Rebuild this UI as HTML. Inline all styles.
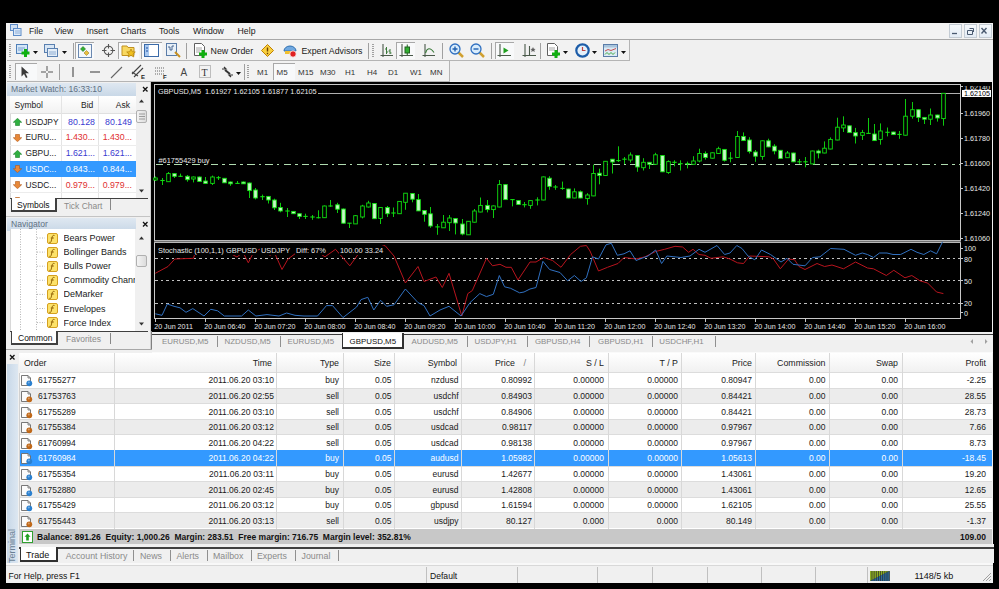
<!DOCTYPE html><html><head><meta charset="utf-8"><style>
*{box-sizing:border-box;margin:0;padding:0}
html,body{width:999px;height:589px;overflow:hidden;background:#000}
body{position:relative;font-family:"Liberation Sans",sans-serif;font-size:8.5px;color:#000}
.a{position:absolute}
.t{position:absolute;white-space:nowrap;line-height:10px}
.r{text-align:right}
</style></head><body>

<div class="a" style="left:6px;top:23px;width:987px;height:560px;background:#f0f0f0"></div>
<div class="a" style="left:6px;top:23px;width:987px;height:16px;background:#f3f3f3"></div>
<div class="a" style="left:6px;top:39px;width:987px;height:1px;background:#a8a8a8"></div>
<svg class="a" style="left:10px;top:24px" width="12" height="13" viewBox="0 0 12 13"><rect x="0.5" y="0.5" width="7" height="6" fill="#cfe0f4" stroke="#5d8cc8"/><rect x="3.5" y="4.5" width="7.5" height="7" fill="#dce9f8" stroke="#5d8cc8"/><path d="M5 7h5M5 9h5" stroke="#7aa0d0" stroke-width="0.8"/></svg>
<div class="t" style="left:29px;top:26px;color:#1a1a1a;font-size:8.7px">File</div>
<div class="t" style="left:54.5px;top:26px;color:#1a1a1a;font-size:8.7px">View</div>
<div class="t" style="left:86.5px;top:26px;color:#1a1a1a;font-size:8.7px">Insert</div>
<div class="t" style="left:120.5px;top:26px;color:#1a1a1a;font-size:8.7px">Charts</div>
<div class="t" style="left:159px;top:26px;color:#1a1a1a;font-size:8.7px">Tools</div>
<div class="t" style="left:193px;top:26px;color:#1a1a1a;font-size:8.7px">Window</div>
<div class="t" style="left:237.6px;top:26px;color:#1a1a1a;font-size:8.7px">Help</div>
<div class="a" style="left:948.5px;top:24px;width:13.5px;height:14px;background:linear-gradient(#f6f9fc,#e4ecf5);border:1px solid #c4ccd4"></div>
<div class="a" style="left:963.5px;top:24px;width:13.5px;height:14px;background:linear-gradient(#f6f9fc,#e4ecf5);border:1px solid #c4ccd4"></div>
<div class="a" style="left:978.5px;top:24px;width:13.5px;height:14px;background:linear-gradient(#f6f9fc,#e4ecf5);border:1px solid #c4ccd4"></div>
<svg class="a" style="left:948px;top:24px" width="45" height="14"><path d="M4 9.5h5" stroke="#4a5a70" stroke-width="1.3"/><path d="M19.5 6.5h5v4h-5zM21.5 4.5h4v3.5" fill="none" stroke="#4a5a70" stroke-width="1"/><path d="M33.5 4l5 5.5M38.5 4l-5 5.5" stroke="#4a5a70" stroke-width="1.4"/></svg>
<div class="a" style="left:6px;top:40px;width:987px;height:41px;background:#f0f0f0"></div>
<div class="a" style="left:6px;top:81px;width:987px;height:1px;background:#f0f0f0"></div>
<div class="a" style="left:7px;top:40px;width:623px;height:21px;border-right:1px solid #b4b4b4;border-bottom:1px solid #b4b4b4;background:#f2f2f2"></div>
<div class="a" style="left:7px;top:61px;width:443px;height:21px;border-right:1px solid #b4b4b4;border-bottom:1px solid #b4b4b4;background:#f2f2f2"></div>
<svg class="a" style="left:9px;top:43px" width="3" height="15"><path d="M1 1v13" stroke="#a0a0a0" stroke-width="2" stroke-dasharray="1,1"/></svg>
<svg class="a" style="left:9px;top:64px" width="3" height="15"><path d="M1 1v13" stroke="#a0a0a0" stroke-width="2" stroke-dasharray="1,1"/></svg>
<svg class="a" style="left:372px;top:43px" width="3" height="15"><path d="M1 1v13" stroke="#a0a0a0" stroke-width="2" stroke-dasharray="1,1"/></svg>
<svg class="a" style="left:247px;top:64px" width="3" height="15"><path d="M1 1v13" stroke="#a0a0a0" stroke-width="2" stroke-dasharray="1,1"/></svg>
<div class="a" style="left:75px;top:42px;width:19px;height:17px;background:#f8f9fa;border-left:1px solid #a8a8a8;border-top:1px solid #a8a8a8"></div>
<div class="a" style="left:118px;top:42px;width:21px;height:17px;background:#f8f9fa;border-left:1px solid #a8a8a8;border-top:1px solid #a8a8a8"></div>
<div class="a" style="left:141px;top:42px;width:21px;height:17px;background:#f8f9fa;border-left:1px solid #a8a8a8;border-top:1px solid #a8a8a8"></div>
<div class="a" style="left:396px;top:42px;width:19px;height:17px;background:#f8f9fa;border-left:1px solid #a8a8a8;border-top:1px solid #a8a8a8"></div>
<div class="a" style="left:495px;top:42px;width:19px;height:17px;background:#f8f9fa;border-left:1px solid #a8a8a8;border-top:1px solid #a8a8a8"></div>
<div class="a" style="left:15px;top:63px;width:22px;height:17px;background:#f8f9fa;border-left:1px solid #a8a8a8;border-top:1px solid #a8a8a8"></div>
<div class="a" style="left:273px;top:63px;width:22px;height:17px;background:#f8f9fa;border-left:1px solid #a8a8a8;border-top:1px solid #a8a8a8"></div>
<div class="a" style="left:73px;top:43px;width:1px;height:16px;background:#a0a0a0"></div>
<div class="a" style="left:186px;top:43px;width:1px;height:16px;background:#a0a0a0"></div>
<div class="a" style="left:368px;top:43px;width:1px;height:16px;background:#a0a0a0"></div>
<div class="a" style="left:442px;top:43px;width:1px;height:16px;background:#a0a0a0"></div>
<div class="a" style="left:491px;top:43px;width:1px;height:16px;background:#a0a0a0"></div>
<div class="a" style="left:540px;top:43px;width:1px;height:16px;background:#a0a0a0"></div>
<div class="a" style="left:59px;top:64px;width:1px;height:16px;background:#a0a0a0"></div>
<div class="a" style="left:244px;top:64px;width:1px;height:16px;background:#a0a0a0"></div>
<svg class="a" style="left:33px;top:51px" width="5" height="3"><path d="M0 0h5l-2.5 3z" fill="#111"/></svg>
<svg class="a" style="left:62px;top:51px" width="5" height="3"><path d="M0 0h5l-2.5 3z" fill="#111"/></svg>
<div class="t" style="left:210.6px;top:46px;color:#1a1a1a;font-size:8.8px">New Order</div>
<div class="t" style="left:301.4px;top:46px;color:#1a1a1a;font-size:8.8px">Expert Advisors</div>
<svg class="a" style="left:563px;top:51px" width="5" height="3"><path d="M0 0h5l-2.5 3z" fill="#111"/></svg>
<svg class="a" style="left:592px;top:51px" width="5" height="3"><path d="M0 0h5l-2.5 3z" fill="#111"/></svg>
<svg class="a" style="left:621px;top:51px" width="5" height="3"><path d="M0 0h5l-2.5 3z" fill="#111"/></svg>
<div class="t" style="left:180.5px;top:68px;font-size:10px;color:#444">A</div>
<svg class="a" style="left:236px;top:72px" width="5" height="3"><path d="M0 0h5l-2.5 3z" fill="#111"/></svg>
<div class="t" style="left:257px;top:67.5px;color:#333;font-size:8px">M1</div>
<div class="t" style="left:276.5px;top:67.5px;color:#333;font-size:8px">M5</div>
<div class="t" style="left:298px;top:67.5px;color:#333;font-size:8px">M15</div>
<div class="t" style="left:320px;top:67.5px;color:#333;font-size:8px">M30</div>
<div class="t" style="left:345px;top:67.5px;color:#333;font-size:8px">H1</div>
<div class="t" style="left:367px;top:67.5px;color:#333;font-size:8px">H4</div>
<div class="t" style="left:388px;top:67.5px;color:#333;font-size:8px">D1</div>
<div class="t" style="left:410px;top:67.5px;color:#333;font-size:8px">W1</div>
<div class="t" style="left:430px;top:67.5px;color:#333;font-size:8px">MN</div>
<svg class="a" style="left:16px;top:43px" width="15" height="15"><rect x="0.5" y="1.5" width="11" height="9" fill="#d4e6f8" stroke="#5080b8"/><path d="M2 5h7M2 7h5" stroke="#6090c0" stroke-width="0.8"/><path d="M9.5 6v8M5.5 10h8" stroke="#10b010" stroke-width="3"/></svg>
<svg class="a" style="left:44px;top:43px" width="15" height="15"><rect x="0.5" y="1.5" width="10" height="8" fill="#d8e6f4" stroke="#5a80b0"/><rect x="3.5" y="5.5" width="10" height="8" fill="#e4eef8" stroke="#5a80b0"/><path d="M5 9h7M5 11h7" stroke="#7a9cc8" stroke-width="0.8"/></svg>
<svg class="a" style="left:78px;top:44px" width="14" height="14"><rect x="0.5" y="0.5" width="13" height="13" fill="#f4f8fc" stroke="#6a88b0"/><path d="M5 2.5l2.5 2.5-2.5 2.5-2.5-2.5z" fill="#30b030" stroke="#207020" stroke-width="0.6"/><path d="M8.5 6.5l2.5 2.5-2.5 2.5-2.5-2.5z" fill="#e8c040" stroke="#a08020" stroke-width="0.6"/></svg>
<svg class="a" style="left:101px;top:43px" width="15" height="15"><circle cx="7.5" cy="7.5" r="4.3" fill="none" stroke="#555" stroke-width="1.1"/><path d="M7.5 1v4.5M7.5 9.5V14M1 7.5h4.5M9.5 7.5H14" stroke="#555" stroke-width="1.1"/></svg>
<svg class="a" style="left:121px;top:43px" width="17" height="15"><path d="M1 3h5l1 1.5h6v8H1z" fill="#f8d860" stroke="#c09020"/><path d="M10 6l1.3 2.7 3 .3-2.3 2 .8 3-2.8-1.6-2.8 1.6.8-3-2.3-2 3-.3z" fill="#f0c020" stroke="#b08010" stroke-width="0.7"/></svg>
<svg class="a" style="left:144px;top:43px" width="15" height="15"><rect x="0.5" y="1.5" width="14" height="12" fill="#fff" stroke="#3a6aa8"/><rect x="1" y="2" width="4" height="11" fill="#a8c8f0"/><path d="M2 5h2M2 8h2" stroke="#2050a0"/></svg>
<svg class="a" style="left:166px;top:43px" width="15" height="15"><rect x="0.5" y="0.5" width="10" height="12" fill="#e8f0f8" stroke="#5a7ca8"/><path d="M2 4h2v3h2v-4h2" stroke="#3a5a88" fill="none" stroke-width="0.9"/><path d="M9 9l5 5" stroke="#c89020" stroke-width="2"/></svg>
<svg class="a" style="left:194px;top:43px" width="14" height="15"><path d="M0.5 0.5h7l3 3v9h-10z" fill="#fff" stroke="#606060"/><path d="M2 5h6M2 7h6M2 9h4" stroke="#909090" stroke-width="0.8"/><path d="M9 7v8M5 11h8" stroke="#10b010" stroke-width="3"/></svg>
<svg class="a" style="left:261px;top:44px" width="13" height="13"><path d="M6.5 0.5l6 6-6 6-6-6z" fill="#f8d040" stroke="#c08000"/><path d="M6.5 3.5v4M6.5 8.8v1.4" stroke="#704000" stroke-width="1.4"/></svg>
<svg class="a" style="left:283px;top:43px" width="14" height="15"><path d="M1 8a6 5 0 0 1 12 0z" fill="#70a8e0" stroke="#3070b0"/><path d="M2 8h10v3H2z" fill="#f0c030"/><circle cx="10" cy="11" r="3.2" fill="#e02020" stroke="#fff" stroke-width="0.8"/></svg>
<svg class="a" style="left:380px;top:43px" width="14" height="15"><path d="M3 1v13M0.5 12.5H13" stroke="#4a5a4a" stroke-width="1.1" fill="none"/><path d="M6.5 4v7M5 6h1.5M6.5 9H8M10 6v5M8.5 8H10M10 10h1.5" stroke="#3a7a3a" stroke-width="1" fill="none"/></svg>
<svg class="a" style="left:399px;top:43px" width="15" height="15"><path d="M3 1v13M0.5 12.5H14" stroke="#4a5a4a" stroke-width="1.1" fill="none"/><rect x="6" y="4" width="4.5" height="6" fill="#30b030" stroke="#206020"/><path d="M8.25 1.5v2.5M8.25 10v2" stroke="#206020"/></svg>
<svg class="a" style="left:422px;top:43px" width="14" height="15"><path d="M3 1v13M0.5 12.5H13" stroke="#4a5a4a" stroke-width="1.1" fill="none"/><path d="M3.5 10C5 5 8 4 12 9.5" stroke="#3a7a3a" fill="none" stroke-width="1.1"/></svg>
<svg class="a" style="left:449px;top:43px" width="15" height="15"><path d="M9 9l5 5" stroke="#d0a030" stroke-width="2.5"/><circle cx="6" cy="6" r="5" fill="#d8ecfc" stroke="#3070c0" stroke-width="1.3"/><path d="M3.5 6h5M6 3.5v5" stroke="#2060b0" stroke-width="1.4"/></svg>
<svg class="a" style="left:470px;top:43px" width="15" height="15"><path d="M9 9l5 5" stroke="#d0a030" stroke-width="2.5"/><circle cx="6" cy="6" r="5" fill="#d8ecfc" stroke="#3070c0" stroke-width="1.3"/><path d="M3.5 6h5" stroke="#2060b0" stroke-width="1.4"/></svg>
<svg class="a" style="left:497px;top:43px" width="15" height="15"><path d="M3 1v13M0.5 12.5H14" stroke="#4a5a4a" stroke-width="1.1" fill="none"/><path d="M6.5 4.5v6l5-3z" fill="#20a020"/></svg>
<svg class="a" style="left:522px;top:43px" width="15" height="15"><path d="M3 1v13M0.5 12.5H14M7.5 3v9" stroke="#4a5a4a" stroke-width="1.1" fill="none"/><path d="M11 4l.8 1.7 1.8.2-1.3 1.2.4 1.8-1.7-1-1.7 1 .4-1.8-1.3-1.2 1.8-.2z" fill="#606060"/></svg>
<svg class="a" style="left:547px;top:43px" width="14" height="15"><path d="M0.5 0.5h7l3 3v9h-10z" fill="#fff" stroke="#606060"/><path d="M2 5h6M2 7h6" stroke="#909090" stroke-width="0.8"/><path d="M9 7v8M5 11h8" stroke="#10b010" stroke-width="3"/></svg>
<svg class="a" style="left:575px;top:43px" width="15" height="15"><circle cx="7.5" cy="7.5" r="6.2" fill="#e4f0fa" stroke="#1c5ca8" stroke-width="2.2"/><path d="M7.5 4v3.5h3" stroke="#c04040" stroke-width="1.2" fill="none"/></svg>
<svg class="a" style="left:603px;top:44px" width="15" height="13"><rect x="0.5" y="0.5" width="14" height="12" fill="#dceaf4" stroke="#5a7ca8"/><rect x="1" y="1" width="13" height="2.5" fill="#a8c4dc"/><path d="M2 7l3-1.5 3 1 5-2" stroke="#c04040" fill="none" stroke-width="0.9"/><path d="M2 10.5l2-2 2 2 2-2 2 2 2-2" stroke="#30a030" fill="none" stroke-width="0.9"/></svg>
<svg class="a" style="left:20px;top:65px" width="10" height="14"><path d="M1.5 1.5l0 10 2.5-2.5 2 4 1.5-.7-2-4h3.5z" fill="#3a3a3a"/></svg>
<svg class="a" style="left:40px;top:65px" width="14" height="14"><path d="M7 1v5M7 8v5M1 7h5M8 7h5" stroke="#555" stroke-width="1"/></svg>
<svg class="a" style="left:71px;top:65px" width="4" height="14"><path d="M2 2v10" stroke="#555" stroke-width="1.2"/></svg>
<svg class="a" style="left:89px;top:65px" width="12" height="14"><path d="M1 7h10" stroke="#555" stroke-width="1.2"/></svg>
<svg class="a" style="left:110px;top:65px" width="13" height="14"><path d="M1 13L12 2" stroke="#666" stroke-width="1.1"/></svg>
<svg class="a" style="left:131px;top:64px" width="15" height="16"><path d="M1 10l9-9M3 13l9-9M1 8l6 4" stroke="#444" stroke-width="1.1"/><text x="10" y="15" font-size="6" font-family="Liberation Sans" font-weight="bold" fill="#222">E</text></svg>
<svg class="a" style="left:154px;top:65px" width="14" height="15"><path d="M1 3h10M1 6h10M1 9h10" stroke="#666" stroke-width="1" stroke-dasharray="1,1"/><text x="9" y="14" font-size="6" font-family="Liberation Sans" font-weight="bold" fill="#222">F</text></svg>
<svg class="a" style="left:199px;top:65px" width="12" height="14"><rect x="0.5" y="0.5" width="11" height="12" fill="none" stroke="#888" stroke-dasharray="1,1"/><text x="2.5" y="11" font-size="10" font-family="Liberation Serif" fill="#333">T</text></svg>
<svg class="a" style="left:221px;top:66px" width="13" height="12"><path d="M1 3l4 0-2-2M12 9l-4 0 2 2" stroke="#333" fill="none" stroke-width="1.2"/><path d="M4 4l5 4" stroke="#333" stroke-width="2"/></svg>
<div class="a" style="left:6px;top:82px;width:146px;height:267px;background:#f0f0f0"></div>
<div class="a" style="left:7px;top:82.5px;width:129px;height:13px;background:linear-gradient(#dfe8f1,#c9d8e7)"></div>
<div class="t" style="left:11px;top:84.0px;color:#5f7183;font-size:8.6px">Market Watch: 16:33:10</div>
<svg class="a" style="left:141.5px;top:86.0px" width="7" height="7"><path d="M1 1l4.5 4.5M5.5 1l-4.5 4.5" stroke="#111" stroke-width="1.3"/></svg>
<div class="a" style="left:9.5px;top:95.5px;width:126px;height:103px;background:#fff;border-left:1px solid #d8d8d8"></div>
<div class="a" style="left:9.5px;top:95.5px;width:126px;height:18px;background:linear-gradient(#ffffff,#f2f2f2);border-bottom:1px solid #e0e0e0"></div>
<div class="a" style="left:61px;top:95.5px;width:1px;height:103px;background:#e4e4e4"></div>
<div class="a" style="left:97.5px;top:95.5px;width:1px;height:103px;background:#e4e4e4"></div>
<div class="t" style="left:14.5px;top:99.5px;color:#222">Symbol</div>
<div class="t" style="left:-106.7px;width:200px;text-align:right;top:99.5px;color:#222">Bid</div>
<div class="t" style="left:-70px;width:200px;text-align:right;top:99.5px;color:#222">Ask</div>
<div class="a" style="left:9.5px;top:128.9px;width:126px;height:0.6px;background:#ececec"></div>
<svg class="a" style="left:13px;top:117.89999999999999px" width="9" height="8"><path d="M4.5 0.3L8.7 4.3H6.5V7.5H2.5V4.3H0.3z" fill="#30b040" stroke="#188028" stroke-width="0.6"/></svg>
<div class="t" style="left:25.5px;top:116.6px;color:#1a1a1a;font-size:8.4px">USDJPY</div>
<div class="t" style="left:-105px;width:200px;text-align:right;top:116.6px;color:#3a3ad0;font-size:8.8px">80.128</div>
<div class="t" style="left:-68px;width:200px;text-align:right;top:116.6px;color:#3a3ad0;font-size:8.8px">80.149</div>
<div class="a" style="left:9.5px;top:144.70000000000002px;width:126px;height:0.6px;background:#ececec"></div>
<svg class="a" style="left:13px;top:133.70000000000002px" width="9" height="8"><path d="M4.5 7.7L8.7 3.7H6.5V0.5H2.5V3.7H0.3z" fill="#e88838" stroke="#b05818" stroke-width="0.6"/></svg>
<div class="t" style="left:25.5px;top:132.4px;color:#1a1a1a;font-size:8.4px">EURU...</div>
<div class="t" style="left:-105px;width:200px;text-align:right;top:132.4px;color:#e03030;font-size:8.8px">1.430...</div>
<div class="t" style="left:-68px;width:200px;text-align:right;top:132.4px;color:#e03030;font-size:8.8px">1.430...</div>
<div class="a" style="left:9.5px;top:160.5px;width:126px;height:0.6px;background:#ececec"></div>
<svg class="a" style="left:13px;top:149.5px" width="9" height="8"><path d="M4.5 0.3L8.7 4.3H6.5V7.5H2.5V4.3H0.3z" fill="#30b040" stroke="#188028" stroke-width="0.6"/></svg>
<div class="t" style="left:25.5px;top:148.2px;color:#1a1a1a;font-size:8.4px">GBPU...</div>
<div class="t" style="left:-105px;width:200px;text-align:right;top:148.2px;color:#3a3ad0;font-size:8.8px">1.621...</div>
<div class="t" style="left:-68px;width:200px;text-align:right;top:148.2px;color:#3a3ad0;font-size:8.8px">1.621...</div>
<div class="a" style="left:9.5px;top:161.0px;width:126px;height:15.8px;background:#3399ff"></div>
<svg class="a" style="left:13px;top:165.3px" width="9" height="8"><path d="M4.5 7.7L8.7 3.7H6.5V0.5H2.5V3.7H0.3z" fill="#e88838" stroke="#b05818" stroke-width="0.6"/></svg>
<div class="t" style="left:25.5px;top:164.0px;color:#fff;font-size:8.4px">USDC...</div>
<div class="t" style="left:-105px;width:200px;text-align:right;top:164.0px;color:#fff;font-size:8.8px">0.843...</div>
<div class="t" style="left:-68px;width:200px;text-align:right;top:164.0px;color:#fff;font-size:8.8px">0.844...</div>
<div class="a" style="left:9.5px;top:192.10000000000002px;width:126px;height:0.6px;background:#ececec"></div>
<svg class="a" style="left:13px;top:181.10000000000002px" width="9" height="8"><path d="M4.5 7.7L8.7 3.7H6.5V0.5H2.5V3.7H0.3z" fill="#e88838" stroke="#b05818" stroke-width="0.6"/></svg>
<div class="t" style="left:25.5px;top:179.8px;color:#1a1a1a;font-size:8.4px">USDC...</div>
<div class="t" style="left:-105px;width:200px;text-align:right;top:179.8px;color:#e03030;font-size:8.8px">0.979...</div>
<div class="t" style="left:-68px;width:200px;text-align:right;top:179.8px;color:#e03030;font-size:8.8px">0.979...</div>
<div class="a" style="left:9.5px;top:207.9px;width:126px;height:0.6px;background:#ececec"></div>
<svg class="a" style="left:13px;top:196.9px" width="9" height="8"><path d="M4.5 7.7L8.7 3.7H6.5V0.5H2.5V3.7H0.3z" fill="#e88838" stroke="#b05818" stroke-width="0.6"/></svg>
<div class="t" style="left:25.5px;top:195.6px;color:#1a1a1a;font-size:8.4px">AUD</div>
<div class="t" style="left:-105px;width:200px;text-align:right;top:195.6px;color:#e03030;font-size:8.8px">0.980</div>
<div class="t" style="left:-68px;width:200px;text-align:right;top:195.6px;color:#e03030;font-size:8.8px">0.980</div>
<div class="a" style="left:135.5px;top:95.5px;width:12px;height:103px;background:#f0f0f0"></div>
<svg class="a" style="left:138px;top:99px" width="7" height="4"><path d="M1 3.5l2.5-3 2.5 3z" fill="#333"/></svg>
<div class="a" style="left:136px;top:110px;width:11px;height:13px;background:linear-gradient(90deg,#f4f4f4,#dcdcdc);border:1px solid #b0b0b0;border-radius:2px"></div>
<svg class="a" style="left:139px;top:113px" width="6" height="7"><path d="M0 1h6M0 3.5h6M0 6h6" stroke="#888" stroke-width="0.8"/></svg>
<svg class="a" style="left:138px;top:189px" width="7" height="4"><path d="M1 .5l2.5 3 2.5-3z" fill="#333"/></svg>
<div class="a" style="left:9.5px;top:197.5px;width:138px;height:15px;background:#f0f0f0;border-top:1px solid #404040"></div>
<div class="a" style="left:10.5px;top:197.5px;width:46px;height:14px;background:#fff;border:1px solid #404040;border-top:none;border-right-width:2px;border-bottom-width:2px"></div>
<div class="t" style="left:17px;top:200px;color:#111">Symbols</div>
<div class="t" style="left:64px;top:200.8px;color:#8a8a8a">Tick Chart</div>
<div class="a" style="left:110px;top:199px;width:1px;height:11px;background:#888"></div>
<div class="a" style="left:6px;top:216px;width:145px;height:1px;background:#c4c4c4"></div>
<div class="a" style="left:150px;top:82px;width:1px;height:135px;background:#d0d0d0"></div>
<div class="a" style="left:150px;top:217px;width:1px;height:132px;background:#d0d0d0"></div>
<div class="a" style="left:7px;top:217.5px;width:129px;height:13px;background:linear-gradient(#dfe8f1,#c9d8e7)"></div>
<div class="t" style="left:11px;top:219.0px;color:#5f7183;font-size:8.6px">Navigator</div>
<svg class="a" style="left:141.5px;top:221.0px" width="7" height="7"><path d="M1 1l4.5 4.5M5.5 1l-4.5 4.5" stroke="#111" stroke-width="1.3"/></svg>
<div class="a" style="left:9.5px;top:229px;width:126px;height:102px;background:#fff;border-left:1px solid #d8d8d8"></div>
<svg class="a" style="left:9px;top:229px" width="40" height="102"><path d="M11.5 0v102M27.5 0v102" stroke="#b4b4b4" stroke-dasharray="1,1.5"/><path d="M28 9.0h8" stroke="#b4b4b4" stroke-dasharray="1,1.5"/><path d="M28 23.1h8" stroke="#b4b4b4" stroke-dasharray="1,1.5"/><path d="M28 37.2h8" stroke="#b4b4b4" stroke-dasharray="1,1.5"/><path d="M28 51.3h8" stroke="#b4b4b4" stroke-dasharray="1,1.5"/><path d="M28 65.4h8" stroke="#b4b4b4" stroke-dasharray="1,1.5"/><path d="M28 79.5h8" stroke="#b4b4b4" stroke-dasharray="1,1.5"/><path d="M28 93.6h8" stroke="#b4b4b4" stroke-dasharray="1,1.5"/></svg>
<svg class="a" style="left:47px;top:232.5px" width="11" height="11"><rect x="0.5" y="0.5" width="10" height="10" rx="1.5" fill="#fde26a" stroke="#d4a020"/><path d="M7.5 2.5c-1.5-.5-2 .3-2.3 1.5L4.2 8.3c-.3 1.2-.9 1.4-1.9 1M3.8 5h3" stroke="#8a5a00" fill="none" stroke-width="0.9"/></svg>
<div class="t" style="left:63.5px;top:233.0px;width:72px;overflow:hidden;color:#1a1a1a;font-size:9px">Bears Power</div>
<svg class="a" style="left:47px;top:246.6px" width="11" height="11"><rect x="0.5" y="0.5" width="10" height="10" rx="1.5" fill="#fde26a" stroke="#d4a020"/><path d="M7.5 2.5c-1.5-.5-2 .3-2.3 1.5L4.2 8.3c-.3 1.2-.9 1.4-1.9 1M3.8 5h3" stroke="#8a5a00" fill="none" stroke-width="0.9"/></svg>
<div class="t" style="left:63.5px;top:247.1px;width:72px;overflow:hidden;color:#1a1a1a;font-size:9px">Bollinger Bands</div>
<svg class="a" style="left:47px;top:260.7px" width="11" height="11"><rect x="0.5" y="0.5" width="10" height="10" rx="1.5" fill="#fde26a" stroke="#d4a020"/><path d="M7.5 2.5c-1.5-.5-2 .3-2.3 1.5L4.2 8.3c-.3 1.2-.9 1.4-1.9 1M3.8 5h3" stroke="#8a5a00" fill="none" stroke-width="0.9"/></svg>
<div class="t" style="left:63.5px;top:261.2px;width:72px;overflow:hidden;color:#1a1a1a;font-size:9px">Bulls Power</div>
<svg class="a" style="left:47px;top:274.8px" width="11" height="11"><rect x="0.5" y="0.5" width="10" height="10" rx="1.5" fill="#fde26a" stroke="#d4a020"/><path d="M7.5 2.5c-1.5-.5-2 .3-2.3 1.5L4.2 8.3c-.3 1.2-.9 1.4-1.9 1M3.8 5h3" stroke="#8a5a00" fill="none" stroke-width="0.9"/></svg>
<div class="t" style="left:63.5px;top:275.3px;width:72px;overflow:hidden;color:#1a1a1a;font-size:9px">Commodity Channel Index</div>
<svg class="a" style="left:47px;top:288.9px" width="11" height="11"><rect x="0.5" y="0.5" width="10" height="10" rx="1.5" fill="#fde26a" stroke="#d4a020"/><path d="M7.5 2.5c-1.5-.5-2 .3-2.3 1.5L4.2 8.3c-.3 1.2-.9 1.4-1.9 1M3.8 5h3" stroke="#8a5a00" fill="none" stroke-width="0.9"/></svg>
<div class="t" style="left:63.5px;top:289.4px;width:72px;overflow:hidden;color:#1a1a1a;font-size:9px">DeMarker</div>
<svg class="a" style="left:47px;top:303.0px" width="11" height="11"><rect x="0.5" y="0.5" width="10" height="10" rx="1.5" fill="#fde26a" stroke="#d4a020"/><path d="M7.5 2.5c-1.5-.5-2 .3-2.3 1.5L4.2 8.3c-.3 1.2-.9 1.4-1.9 1M3.8 5h3" stroke="#8a5a00" fill="none" stroke-width="0.9"/></svg>
<div class="t" style="left:63.5px;top:303.5px;width:72px;overflow:hidden;color:#1a1a1a;font-size:9px">Envelopes</div>
<svg class="a" style="left:47px;top:317.1px" width="11" height="11"><rect x="0.5" y="0.5" width="10" height="10" rx="1.5" fill="#fde26a" stroke="#d4a020"/><path d="M7.5 2.5c-1.5-.5-2 .3-2.3 1.5L4.2 8.3c-.3 1.2-.9 1.4-1.9 1M3.8 5h3" stroke="#8a5a00" fill="none" stroke-width="0.9"/></svg>
<div class="t" style="left:63.5px;top:317.6px;width:72px;overflow:hidden;color:#1a1a1a;font-size:9px">Force Index</div>
<div class="a" style="left:135px;top:229px;width:13px;height:102px;background:#f0f0f0"></div>
<svg class="a" style="left:138px;top:236px" width="7" height="4"><path d="M1 3.5l2.5-3 2.5 3z" fill="#333"/></svg>
<div class="a" style="left:136px;top:255px;width:11px;height:12px;background:linear-gradient(90deg,#f4f4f4,#dcdcdc);border:1px solid #b0b0b0;border-radius:2px"></div>
<svg class="a" style="left:138px;top:322px" width="7" height="4"><path d="M1 .5l2.5 3 2.5-3z" fill="#333"/></svg>
<div class="a" style="left:9.5px;top:331px;width:138px;height:15px;background:#f0f0f0;border-top:1px solid #404040"></div>
<div class="a" style="left:10.5px;top:331px;width:47px;height:14px;background:#fff;border:1px solid #404040;border-top:none;border-right-width:2px;border-bottom-width:2px"></div>
<div class="t" style="left:18px;top:333px;color:#111">Common</div>
<div class="t" style="left:66px;top:333.5px;color:#8a8a8a">Favorites</div>
<div class="a" style="left:110px;top:333px;width:1px;height:11px;background:#888"></div>
<svg class="a" style="left:151px;top:82px" width="841" height="251" viewBox="151 82 841 251" shape-rendering="crispEdges">
<rect x="151" y="82" width="841" height="251" fill="#000"/>
<path d="M154.5 84.5H960.5V318.5H154.5Z" fill="none" stroke="#c8c8c8"/>
<rect x="154" y="240" width="807" height="3" fill="#b8b8b8"/>
<rect x="154" y="241" width="807" height="1" fill="#707070"/>
<path d="M318 93.5H960" stroke="#b0b0b0"/>
<path d="M156 164.5H960" stroke="#b0dcb0" stroke-dasharray="7.5,4.2,2.35,4.2" stroke-dashoffset="0.25"/>
<g shape-rendering="auto">
<path d="M155.5 176.5V181.0" stroke="#10e010" stroke-width="0.9"/>
<rect x="153.7" y="178.0" width="3.6" height="2.0" fill="#000" stroke="#10e010" stroke-width="0.9"/>
<path d="M162.5 178.0V185.0" stroke="#10e010" stroke-width="0.9"/>
<path d="M160.3 180.5H164.7" stroke="#10e010" stroke-width="1.1"/>
<path d="M168.5 172.0V181.7" stroke="#10e010" stroke-width="0.9"/>
<rect x="166.7" y="173.6" width="3.6" height="8.1" fill="#000" stroke="#10e010" stroke-width="0.9"/>
<path d="M174.5 173.0V178.0" stroke="#10e010" stroke-width="0.9"/>
<rect x="172.7" y="173.6" width="3.6" height="2.7" fill="#c8f8c8" stroke="#10e010" stroke-width="0.9"/>
<path d="M180.5 173.6V177.0" stroke="#10e010" stroke-width="0.9"/>
<path d="M178.3 176.3H182.7" stroke="#10e010" stroke-width="1.1"/>
<path d="M187.5 175.0V181.7" stroke="#10e010" stroke-width="0.9"/>
<rect x="185.7" y="176.3" width="3.6" height="3.4" fill="#c8f8c8" stroke="#10e010" stroke-width="0.9"/>
<path d="M193.5 176.5V182.4" stroke="#10e010" stroke-width="0.9"/>
<rect x="191.7" y="177.0" width="3.6" height="2.0" fill="#000" stroke="#10e010" stroke-width="0.9"/>
<path d="M199.5 176.5V182.0" stroke="#10e010" stroke-width="0.9"/>
<rect x="197.7" y="177.0" width="3.6" height="4.5" fill="#c8f8c8" stroke="#10e010" stroke-width="0.9"/>
<path d="M205.5 177.0V183.4" stroke="#10e010" stroke-width="0.9"/>
<rect x="203.7" y="181.0" width="3.6" height="2.4" fill="#c8f8c8" stroke="#10e010" stroke-width="0.9"/>
<path d="M212.5 175.6V185.0" stroke="#10e010" stroke-width="0.9"/>
<rect x="210.7" y="177.0" width="3.6" height="6.4" fill="#000" stroke="#10e010" stroke-width="0.9"/>
<path d="M218.5 176.0V180.0" stroke="#10e010" stroke-width="0.9"/>
<path d="M216.3 177.7H220.7" stroke="#10e010" stroke-width="1.1"/>
<path d="M224.5 178.0V183.0" stroke="#10e010" stroke-width="0.9"/>
<rect x="222.7" y="178.3" width="3.6" height="4.5" fill="#c8f8c8" stroke="#10e010" stroke-width="0.9"/>
<path d="M230.5 181.5V185.8" stroke="#10e010" stroke-width="0.9"/>
<rect x="228.7" y="182.0" width="3.6" height="1.8" fill="#c8f8c8" stroke="#10e010" stroke-width="0.9"/>
<path d="M237.5 181.0V183.5" stroke="#10e010" stroke-width="0.9"/>
<path d="M235.3 183.4H239.7" stroke="#10e010" stroke-width="1.1"/>
<path d="M243.5 181.5V184.0" stroke="#10e010" stroke-width="0.9"/>
<rect x="241.7" y="182.0" width="3.6" height="1.8" fill="#c8f8c8" stroke="#10e010" stroke-width="0.9"/>
<path d="M249.5 182.5V198.0" stroke="#10e010" stroke-width="0.9"/>
<rect x="247.7" y="183.0" width="3.6" height="7.6" fill="#c8f8c8" stroke="#10e010" stroke-width="0.9"/>
<path d="M255.5 188.0V199.4" stroke="#10e010" stroke-width="0.9"/>
<rect x="253.7" y="190.0" width="3.6" height="8.0" fill="#c8f8c8" stroke="#10e010" stroke-width="0.9"/>
<path d="M262.5 194.6V200.0" stroke="#10e010" stroke-width="0.9"/>
<path d="M260.3 196.7H264.7" stroke="#10e010" stroke-width="1.1"/>
<path d="M268.5 196.0V203.5" stroke="#10e010" stroke-width="0.9"/>
<rect x="266.7" y="196.4" width="3.6" height="3.6" fill="#c8f8c8" stroke="#10e010" stroke-width="0.9"/>
<path d="M274.5 198.7V210.0" stroke="#10e010" stroke-width="0.9"/>
<rect x="272.7" y="200.0" width="3.6" height="7.8" fill="#c8f8c8" stroke="#10e010" stroke-width="0.9"/>
<path d="M280.5 202.8V212.3" stroke="#10e010" stroke-width="0.9"/>
<rect x="278.7" y="207.5" width="3.6" height="3.5" fill="#c8f8c8" stroke="#10e010" stroke-width="0.9"/>
<path d="M287.5 208.0V217.0" stroke="#10e010" stroke-width="0.9"/>
<path d="M285.3 211.0H289.7" stroke="#10e010" stroke-width="1.1"/>
<path d="M293.5 211.0V214.0" stroke="#10e010" stroke-width="0.9"/>
<rect x="291.7" y="211.4" width="3.6" height="2.3" fill="#c8f8c8" stroke="#10e010" stroke-width="0.9"/>
<path d="M299.5 213.5V219.0" stroke="#10e010" stroke-width="0.9"/>
<rect x="297.7" y="213.7" width="3.6" height="2.7" fill="#c8f8c8" stroke="#10e010" stroke-width="0.9"/>
<path d="M305.5 213.7V219.0" stroke="#10e010" stroke-width="0.9"/>
<path d="M303.3 216.4H307.7" stroke="#10e010" stroke-width="1.1"/>
<path d="M312.5 215.0V219.8" stroke="#10e010" stroke-width="0.9"/>
<path d="M310.3 217.0H314.7" stroke="#10e010" stroke-width="1.1"/>
<path d="M318.5 210.3V218.4" stroke="#10e010" stroke-width="0.9"/>
<path d="M316.3 217.7H320.7" stroke="#10e010" stroke-width="1.1"/>
<path d="M324.5 205.5V218.0" stroke="#10e010" stroke-width="0.9"/>
<rect x="322.7" y="206.0" width="3.6" height="11.7" fill="#000" stroke="#10e010" stroke-width="0.9"/>
<path d="M330.5 200.0V206.8" stroke="#10e010" stroke-width="0.9"/>
<path d="M328.3 206.0H332.7" stroke="#10e010" stroke-width="1.1"/>
<path d="M337.5 202.8V213.0" stroke="#10e010" stroke-width="0.9"/>
<rect x="335.7" y="204.8" width="3.6" height="4.4" fill="#c8f8c8" stroke="#10e010" stroke-width="0.9"/>
<path d="M343.5 208.5V223.5" stroke="#10e010" stroke-width="0.9"/>
<rect x="341.7" y="209.0" width="3.6" height="14.2" fill="#c8f8c8" stroke="#10e010" stroke-width="0.9"/>
<path d="M349.5 223.0V228.0" stroke="#10e010" stroke-width="0.9"/>
<path d="M347.3 223.2H351.7" stroke="#10e010" stroke-width="1.1"/>
<path d="M355.5 215.0V224.0" stroke="#10e010" stroke-width="0.9"/>
<rect x="353.7" y="215.7" width="3.6" height="8.2" fill="#000" stroke="#10e010" stroke-width="0.9"/>
<path d="M362.5 204.8V218.4" stroke="#10e010" stroke-width="0.9"/>
<rect x="360.7" y="206.0" width="3.6" height="11.0" fill="#000" stroke="#10e010" stroke-width="0.9"/>
<path d="M368.5 200.8V207.5" stroke="#10e010" stroke-width="0.9"/>
<rect x="366.7" y="203.0" width="3.6" height="4.0" fill="#000" stroke="#10e010" stroke-width="0.9"/>
<path d="M374.5 203.0V219.0" stroke="#10e010" stroke-width="0.9"/>
<rect x="372.7" y="203.5" width="3.6" height="15.2" fill="#c8f8c8" stroke="#10e010" stroke-width="0.9"/>
<path d="M380.5 207.0V224.0" stroke="#10e010" stroke-width="0.9"/>
<rect x="378.7" y="207.5" width="3.6" height="10.9" fill="#000" stroke="#10e010" stroke-width="0.9"/>
<path d="M387.5 206.0V217.0" stroke="#10e010" stroke-width="0.9"/>
<rect x="385.7" y="207.5" width="3.6" height="6.2" fill="#c8f8c8" stroke="#10e010" stroke-width="0.9"/>
<path d="M393.5 207.5V217.0" stroke="#10e010" stroke-width="0.9"/>
<path d="M391.3 213.0H395.7" stroke="#10e010" stroke-width="1.1"/>
<path d="M399.5 201.0V214.0" stroke="#10e010" stroke-width="0.9"/>
<rect x="397.7" y="201.4" width="3.6" height="12.3" fill="#000" stroke="#10e010" stroke-width="0.9"/>
<path d="M405.5 193.0V209.8" stroke="#10e010" stroke-width="0.9"/>
<rect x="403.7" y="193.2" width="3.6" height="9.1" fill="#000" stroke="#10e010" stroke-width="0.9"/>
<path d="M412.5 193.0V202.3" stroke="#10e010" stroke-width="0.9"/>
<rect x="410.7" y="193.5" width="3.6" height="5.7" fill="#c8f8c8" stroke="#10e010" stroke-width="0.9"/>
<path d="M418.5 194.0V211.0" stroke="#10e010" stroke-width="0.9"/>
<rect x="416.7" y="199.6" width="3.6" height="11.3" fill="#c8f8c8" stroke="#10e010" stroke-width="0.9"/>
<path d="M424.5 210.0V221.7" stroke="#10e010" stroke-width="0.9"/>
<rect x="422.7" y="210.5" width="3.6" height="3.8" fill="#c8f8c8" stroke="#10e010" stroke-width="0.9"/>
<path d="M430.5 207.0V227.8" stroke="#10e010" stroke-width="0.9"/>
<rect x="428.7" y="213.8" width="3.6" height="12.2" fill="#c8f8c8" stroke="#10e010" stroke-width="0.9"/>
<path d="M437.5 224.0V234.8" stroke="#10e010" stroke-width="0.9"/>
<path d="M435.3 226.9H439.7" stroke="#10e010" stroke-width="1.1"/>
<path d="M443.5 215.0V228.0" stroke="#10e010" stroke-width="0.9"/>
<rect x="441.7" y="222.2" width="3.6" height="5.6" fill="#000" stroke="#10e010" stroke-width="0.9"/>
<path d="M449.5 215.0V231.0" stroke="#10e010" stroke-width="0.9"/>
<rect x="447.7" y="218.0" width="3.6" height="4.7" fill="#000" stroke="#10e010" stroke-width="0.9"/>
<path d="M455.5 218.0V234.4" stroke="#10e010" stroke-width="0.9"/>
<rect x="453.7" y="218.5" width="3.6" height="4.5" fill="#c8f8c8" stroke="#10e010" stroke-width="0.9"/>
<path d="M462.5 219.0V235.3" stroke="#10e010" stroke-width="0.9"/>
<rect x="460.7" y="224.0" width="3.6" height="10.0" fill="#c8f8c8" stroke="#10e010" stroke-width="0.9"/>
<path d="M468.5 221.0V235.0" stroke="#10e010" stroke-width="0.9"/>
<rect x="466.7" y="221.3" width="3.6" height="13.5" fill="#000" stroke="#10e010" stroke-width="0.9"/>
<path d="M474.5 209.0V222.5" stroke="#10e010" stroke-width="0.9"/>
<rect x="472.7" y="211.0" width="3.6" height="11.2" fill="#000" stroke="#10e010" stroke-width="0.9"/>
<path d="M480.5 197.5V212.3" stroke="#10e010" stroke-width="0.9"/>
<rect x="478.7" y="205.4" width="3.6" height="6.6" fill="#000" stroke="#10e010" stroke-width="0.9"/>
<path d="M487.5 200.0V212.4" stroke="#10e010" stroke-width="0.9"/>
<rect x="485.7" y="205.4" width="3.6" height="4.2" fill="#c8f8c8" stroke="#10e010" stroke-width="0.9"/>
<path d="M493.5 205.5V218.0" stroke="#10e010" stroke-width="0.9"/>
<rect x="491.7" y="205.9" width="3.6" height="3.7" fill="#000" stroke="#10e010" stroke-width="0.9"/>
<path d="M499.5 180.0V207.3" stroke="#10e010" stroke-width="0.9"/>
<rect x="497.7" y="184.6" width="3.6" height="22.4" fill="#000" stroke="#10e010" stroke-width="0.9"/>
<path d="M505.5 184.3V200.0" stroke="#10e010" stroke-width="0.9"/>
<rect x="503.7" y="184.6" width="3.6" height="15.0" fill="#c8f8c8" stroke="#10e010" stroke-width="0.9"/>
<path d="M512.5 199.3V206.4" stroke="#10e010" stroke-width="0.9"/>
<path d="M510.3 199.6H514.7" stroke="#10e010" stroke-width="1.1"/>
<path d="M518.5 200.0V205.0" stroke="#10e010" stroke-width="0.9"/>
<rect x="516.7" y="200.5" width="3.6" height="4.0" fill="#c8f8c8" stroke="#10e010" stroke-width="0.9"/>
<path d="M524.5 202.0V207.4" stroke="#10e010" stroke-width="0.9"/>
<path d="M522.3 204.7H526.7" stroke="#10e010" stroke-width="1.1"/>
<path d="M530.5 200.3V208.8" stroke="#10e010" stroke-width="0.9"/>
<rect x="528.7" y="200.6" width="3.6" height="4.8" fill="#000" stroke="#10e010" stroke-width="0.9"/>
<path d="M537.5 197.3V205.4" stroke="#10e010" stroke-width="0.9"/>
<path d="M535.3 200.0H539.7" stroke="#10e010" stroke-width="1.1"/>
<path d="M543.5 176.5V200.3" stroke="#10e010" stroke-width="0.9"/>
<rect x="541.7" y="176.9" width="3.6" height="23.1" fill="#000" stroke="#10e010" stroke-width="0.9"/>
<path d="M549.5 176.2V189.8" stroke="#10e010" stroke-width="0.9"/>
<rect x="547.7" y="178.2" width="3.6" height="8.2" fill="#c8f8c8" stroke="#10e010" stroke-width="0.9"/>
<path d="M555.5 185.0V189.8" stroke="#10e010" stroke-width="0.9"/>
<path d="M553.3 187.0H557.7" stroke="#10e010" stroke-width="1.1"/>
<path d="M562.5 181.6V189.8" stroke="#10e010" stroke-width="0.9"/>
<path d="M560.3 188.4H564.7" stroke="#10e010" stroke-width="1.1"/>
<path d="M568.5 188.7V198.3" stroke="#10e010" stroke-width="0.9"/>
<rect x="566.7" y="189.0" width="3.6" height="9.0" fill="#c8f8c8" stroke="#10e010" stroke-width="0.9"/>
<path d="M574.5 188.4V198.3" stroke="#10e010" stroke-width="0.9"/>
<rect x="572.7" y="191.8" width="3.6" height="6.2" fill="#000" stroke="#10e010" stroke-width="0.9"/>
<path d="M580.5 190.5V198.3" stroke="#10e010" stroke-width="0.9"/>
<rect x="578.7" y="191.8" width="3.6" height="6.2" fill="#c8f8c8" stroke="#10e010" stroke-width="0.9"/>
<path d="M587.5 193.2V204.7" stroke="#10e010" stroke-width="0.9"/>
<rect x="585.7" y="195.0" width="3.6" height="3.6" fill="#000" stroke="#10e010" stroke-width="0.9"/>
<path d="M593.5 164.6V196.2" stroke="#10e010" stroke-width="0.9"/>
<rect x="591.7" y="173.5" width="3.6" height="22.4" fill="#000" stroke="#10e010" stroke-width="0.9"/>
<path d="M599.5 168.7V184.3" stroke="#10e010" stroke-width="0.9"/>
<rect x="597.7" y="173.2" width="3.6" height="2.3" fill="#c8f8c8" stroke="#10e010" stroke-width="0.9"/>
<path d="M605.5 161.0V175.8" stroke="#10e010" stroke-width="0.9"/>
<rect x="603.7" y="161.3" width="3.6" height="14.2" fill="#000" stroke="#10e010" stroke-width="0.9"/>
<path d="M612.5 159.0V173.5" stroke="#10e010" stroke-width="0.9"/>
<rect x="610.7" y="159.2" width="3.6" height="2.8" fill="#c8f8c8" stroke="#10e010" stroke-width="0.9"/>
<path d="M618.5 146.3V162.0" stroke="#10e010" stroke-width="0.9"/>
<path d="M616.3 160.6H620.7" stroke="#10e010" stroke-width="1.1"/>
<path d="M624.5 157.0V164.0" stroke="#10e010" stroke-width="0.9"/>
<path d="M622.3 159.2H626.7" stroke="#10e010" stroke-width="1.1"/>
<path d="M630.5 152.4V162.6" stroke="#10e010" stroke-width="0.9"/>
<rect x="628.7" y="155.0" width="3.6" height="5.0" fill="#000" stroke="#10e010" stroke-width="0.9"/>
<path d="M637.5 155.2V171.8" stroke="#10e010" stroke-width="0.9"/>
<rect x="635.7" y="155.5" width="3.6" height="11.5" fill="#c8f8c8" stroke="#10e010" stroke-width="0.9"/>
<path d="M643.5 158.2V170.5" stroke="#10e010" stroke-width="0.9"/>
<rect x="641.7" y="162.3" width="3.6" height="5.4" fill="#000" stroke="#10e010" stroke-width="0.9"/>
<path d="M649.5 162.0V169.0" stroke="#10e010" stroke-width="0.9"/>
<rect x="647.7" y="162.3" width="3.6" height="2.0" fill="#c8f8c8" stroke="#10e010" stroke-width="0.9"/>
<path d="M655.5 152.8V164.6" stroke="#10e010" stroke-width="0.9"/>
<rect x="653.7" y="154.8" width="3.6" height="9.5" fill="#000" stroke="#10e010" stroke-width="0.9"/>
<path d="M662.5 155.2V172.1" stroke="#10e010" stroke-width="0.9"/>
<rect x="660.7" y="155.5" width="3.6" height="16.3" fill="#c8f8c8" stroke="#10e010" stroke-width="0.9"/>
<path d="M668.5 160.3V173.9" stroke="#10e010" stroke-width="0.9"/>
<rect x="666.7" y="161.6" width="3.6" height="10.9" fill="#000" stroke="#10e010" stroke-width="0.9"/>
<path d="M674.5 160.3V166.4" stroke="#10e010" stroke-width="0.9"/>
<path d="M672.3 162.3H676.7" stroke="#10e010" stroke-width="1.1"/>
<path d="M680.5 160.3V170.5" stroke="#10e010" stroke-width="0.9"/>
<path d="M678.3 163.7H682.7" stroke="#10e010" stroke-width="1.1"/>
<path d="M687.5 161.6V168.4" stroke="#10e010" stroke-width="0.9"/>
<path d="M685.3 163.7H689.7" stroke="#10e010" stroke-width="1.1"/>
<path d="M693.5 156.2V164.6" stroke="#10e010" stroke-width="0.9"/>
<rect x="691.7" y="161.0" width="3.6" height="3.3" fill="#000" stroke="#10e010" stroke-width="0.9"/>
<path d="M699.5 148.7V162.3" stroke="#10e010" stroke-width="0.9"/>
<rect x="697.7" y="153.5" width="3.6" height="7.5" fill="#000" stroke="#10e010" stroke-width="0.9"/>
<path d="M705.5 151.4V159.6" stroke="#10e010" stroke-width="0.9"/>
<rect x="703.7" y="153.5" width="3.6" height="4.0" fill="#c8f8c8" stroke="#10e010" stroke-width="0.9"/>
<path d="M712.5 152.5V158.5" stroke="#10e010" stroke-width="0.9"/>
<rect x="710.7" y="152.8" width="3.6" height="5.4" fill="#000" stroke="#10e010" stroke-width="0.9"/>
<path d="M718.5 146.7V153.8" stroke="#10e010" stroke-width="0.9"/>
<rect x="716.7" y="148.7" width="3.6" height="4.8" fill="#000" stroke="#10e010" stroke-width="0.9"/>
<path d="M724.5 149.1V161.6" stroke="#10e010" stroke-width="0.9"/>
<rect x="722.7" y="149.4" width="3.6" height="10.9" fill="#c8f8c8" stroke="#10e010" stroke-width="0.9"/>
<path d="M730.5 152.1V162.3" stroke="#10e010" stroke-width="0.9"/>
<path d="M728.3 158.2H732.7" stroke="#10e010" stroke-width="1.1"/>
<path d="M737.5 131.0V157.8" stroke="#10e010" stroke-width="0.9"/>
<rect x="735.7" y="136.5" width="3.6" height="21.0" fill="#000" stroke="#10e010" stroke-width="0.9"/>
<path d="M743.5 132.4V140.9" stroke="#10e010" stroke-width="0.9"/>
<rect x="741.7" y="136.5" width="3.6" height="4.1" fill="#c8f8c8" stroke="#10e010" stroke-width="0.9"/>
<path d="M749.5 137.2V153.5" stroke="#10e010" stroke-width="0.9"/>
<rect x="747.7" y="140.0" width="3.6" height="11.4" fill="#c8f8c8" stroke="#10e010" stroke-width="0.9"/>
<path d="M755.5 150.0V161.8" stroke="#10e010" stroke-width="0.9"/>
<rect x="753.7" y="152.0" width="3.6" height="4.2" fill="#c8f8c8" stroke="#10e010" stroke-width="0.9"/>
<path d="M762.5 140.5V159.8" stroke="#10e010" stroke-width="0.9"/>
<rect x="760.7" y="140.8" width="3.6" height="15.6" fill="#000" stroke="#10e010" stroke-width="0.9"/>
<path d="M768.5 138.7V147.2" stroke="#10e010" stroke-width="0.9"/>
<rect x="766.7" y="140.8" width="3.6" height="6.1" fill="#c8f8c8" stroke="#10e010" stroke-width="0.9"/>
<path d="M774.5 144.2V154.3" stroke="#10e010" stroke-width="0.9"/>
<rect x="772.7" y="146.2" width="3.6" height="4.8" fill="#c8f8c8" stroke="#10e010" stroke-width="0.9"/>
<path d="M780.5 150.0V158.7" stroke="#10e010" stroke-width="0.9"/>
<rect x="778.7" y="150.3" width="3.6" height="8.1" fill="#c8f8c8" stroke="#10e010" stroke-width="0.9"/>
<path d="M787.5 151.0V158.0" stroke="#10e010" stroke-width="0.9"/>
<rect x="785.7" y="153.0" width="3.6" height="4.7" fill="#000" stroke="#10e010" stroke-width="0.9"/>
<path d="M793.5 152.7V162.1" stroke="#10e010" stroke-width="0.9"/>
<rect x="791.7" y="153.0" width="3.6" height="8.8" fill="#c8f8c8" stroke="#10e010" stroke-width="0.9"/>
<path d="M799.5 159.0V163.9" stroke="#10e010" stroke-width="0.9"/>
<path d="M797.3 161.8H801.7" stroke="#10e010" stroke-width="1.1"/>
<path d="M805.5 157.0V167.3" stroke="#10e010" stroke-width="0.9"/>
<path d="M803.3 161.8H807.7" stroke="#10e010" stroke-width="1.1"/>
<path d="M812.5 150.7V164.2" stroke="#10e010" stroke-width="0.9"/>
<rect x="810.7" y="151.0" width="3.6" height="12.9" fill="#000" stroke="#10e010" stroke-width="0.9"/>
<path d="M818.5 149.6V158.4" stroke="#10e010" stroke-width="0.9"/>
<rect x="816.7" y="151.0" width="3.6" height="2.0" fill="#c8f8c8" stroke="#10e010" stroke-width="0.9"/>
<path d="M824.5 141.4V153.3" stroke="#10e010" stroke-width="0.9"/>
<rect x="822.7" y="148.2" width="3.6" height="4.8" fill="#000" stroke="#10e010" stroke-width="0.9"/>
<path d="M830.5 137.4V149.3" stroke="#10e010" stroke-width="0.9"/>
<rect x="828.7" y="139.4" width="3.6" height="9.6" fill="#000" stroke="#10e010" stroke-width="0.9"/>
<path d="M837.5 117.7V140.3" stroke="#10e010" stroke-width="0.9"/>
<rect x="835.7" y="127.2" width="3.6" height="12.8" fill="#000" stroke="#10e010" stroke-width="0.9"/>
<path d="M843.5 116.3V132.0" stroke="#10e010" stroke-width="0.9"/>
<rect x="841.7" y="125.0" width="3.6" height="2.9" fill="#000" stroke="#10e010" stroke-width="0.9"/>
<path d="M849.5 125.5V132.9" stroke="#10e010" stroke-width="0.9"/>
<rect x="847.7" y="125.8" width="3.6" height="6.8" fill="#c8f8c8" stroke="#10e010" stroke-width="0.9"/>
<path d="M855.5 127.9V143.5" stroke="#10e010" stroke-width="0.9"/>
<rect x="853.7" y="132.6" width="3.6" height="3.4" fill="#c8f8c8" stroke="#10e010" stroke-width="0.9"/>
<path d="M862.5 129.9V140.0" stroke="#10e010" stroke-width="0.9"/>
<rect x="860.7" y="132.6" width="3.6" height="2.7" fill="#000" stroke="#10e010" stroke-width="0.9"/>
<path d="M868.5 118.0V133.7" stroke="#10e010" stroke-width="0.9"/>
<path d="M866.3 133.4H870.7" stroke="#10e010" stroke-width="1.1"/>
<path d="M874.5 124.0V140.9" stroke="#10e010" stroke-width="0.9"/>
<rect x="872.7" y="134.0" width="3.6" height="6.6" fill="#c8f8c8" stroke="#10e010" stroke-width="0.9"/>
<path d="M880.5 123.4V144.7" stroke="#10e010" stroke-width="0.9"/>
<rect x="878.7" y="131.0" width="3.6" height="8.4" fill="#000" stroke="#10e010" stroke-width="0.9"/>
<path d="M887.5 127.5V136.4" stroke="#10e010" stroke-width="0.9"/>
<path d="M885.3 132.3H889.7" stroke="#10e010" stroke-width="1.1"/>
<path d="M893.5 131.7V134.9" stroke="#10e010" stroke-width="0.9"/>
<rect x="891.7" y="132.0" width="3.6" height="2.6" fill="#c8f8c8" stroke="#10e010" stroke-width="0.9"/>
<path d="M899.5 131.0V138.8" stroke="#10e010" stroke-width="0.9"/>
<path d="M897.3 134.4H901.7" stroke="#10e010" stroke-width="1.1"/>
<path d="M905.5 99.0V135.5" stroke="#10e010" stroke-width="0.9"/>
<rect x="903.7" y="116.2" width="3.6" height="19.0" fill="#000" stroke="#10e010" stroke-width="0.9"/>
<path d="M912.5 102.0V118.6" stroke="#10e010" stroke-width="0.9"/>
<rect x="910.7" y="109.7" width="3.6" height="6.5" fill="#000" stroke="#10e010" stroke-width="0.9"/>
<path d="M918.5 109.4V122.0" stroke="#10e010" stroke-width="0.9"/>
<rect x="916.7" y="109.7" width="3.6" height="7.7" fill="#c8f8c8" stroke="#10e010" stroke-width="0.9"/>
<path d="M924.5 117.1V124.0" stroke="#10e010" stroke-width="0.9"/>
<rect x="922.7" y="117.4" width="3.6" height="1.8" fill="#c8f8c8" stroke="#10e010" stroke-width="0.9"/>
<path d="M930.5 108.5V125.0" stroke="#10e010" stroke-width="0.9"/>
<rect x="928.7" y="115.0" width="3.6" height="4.2" fill="#000" stroke="#10e010" stroke-width="0.9"/>
<path d="M937.5 114.7V121.6" stroke="#10e010" stroke-width="0.9"/>
<rect x="935.7" y="115.0" width="3.6" height="3.0" fill="#c8f8c8" stroke="#10e010" stroke-width="0.9"/>
<path d="M943.5 93.0V125.7" stroke="#10e010" stroke-width="0.9"/>
<rect x="941.7" y="93.3" width="3.6" height="25.3" fill="#000" stroke="#10e010" stroke-width="0.9"/>
</g>
<text x="158" y="94.3" font-family="Liberation Sans" font-size="7.3" fill="#e8e8e8" xml:space="preserve">GBPUSD,M5  1.61927 1.62105 1.61877 1.62105</text>
<text x="158.5" y="163" font-family="Liberation Sans" font-size="7.4" fill="#e8e8e8">#61755429 buy</text>
<path d="M960 86.5h3" stroke="#c8c8c8"/>
<text x="964" y="89.5" font-family="Liberation Sans" font-size="7.2" fill="#e8e8e8">1.62140</text>
<path d="M960 113.5h3" stroke="#c8c8c8"/>
<text x="964" y="116.4" font-family="Liberation Sans" font-size="7.2" fill="#e8e8e8">1.61960</text>
<path d="M960 138.5h3" stroke="#c8c8c8"/>
<text x="964" y="141.1" font-family="Liberation Sans" font-size="7.2" fill="#e8e8e8">1.61780</text>
<path d="M960 163.5h3" stroke="#c8c8c8"/>
<text x="964" y="166.1" font-family="Liberation Sans" font-size="7.2" fill="#e8e8e8">1.61600</text>
<path d="M960 188.5h3" stroke="#c8c8c8"/>
<text x="964" y="191.4" font-family="Liberation Sans" font-size="7.2" fill="#e8e8e8">1.61420</text>
<path d="M960 213.5h3" stroke="#c8c8c8"/>
<text x="964" y="216.4" font-family="Liberation Sans" font-size="7.2" fill="#e8e8e8">1.61240</text>
<path d="M960 238.5h3" stroke="#c8c8c8"/>
<text x="964" y="240.8" font-family="Liberation Sans" font-size="7.2" fill="#e8e8e8">1.61060</text>
<rect x="961" y="82" width="31" height="3.6" fill="#000"/>
<rect x="961.5" y="89.5" width="29.5" height="7.8" fill="#fff"/>
<text x="964" y="95.9" font-family="Liberation Sans" font-size="7.2" fill="#000">1.62105</text>
<path d="M155 258.5H960" stroke="#c0c0c0" stroke-dasharray="2.5,3"/>
<path d="M155 280.5H960" stroke="#c0c0c0" stroke-dasharray="2.5,3"/>
<path d="M155 303.5H960" stroke="#c0c0c0" stroke-dasharray="2.5,3"/>
<g shape-rendering="auto">
<polyline fill="none" stroke="#b8141e" stroke-width="1" points="155.3,273.3 168.0,266.5 174.8,259.0 193.5,258.3 195.0,253.0 199.5,250.8 207.0,246.3 220.0,248.0 231.0,253.8 237.0,257.0 243.0,252.3 248.3,262.8 253.6,252.3 261.0,248.5 270.0,255.3 274.6,253.0 282.0,269.5 288.0,259.0 295.0,253.8 308.5,252.3 314.5,250.0 325.0,256.8 335.5,249.3 349.8,265.8 358.0,254.5 365.6,252.3 374.6,248.5 385.0,245.5 394.0,256.0 405.4,283.0 418.0,266.5 424.0,281.5 436.0,277.0 442.3,287.5 449.0,273.3 461.8,316.0 467.8,293.6 472.3,290.6 486.5,258.3 492.5,265.8 500.0,264.3 506.0,267.3 511.3,267.3 518.0,280.0 530.0,262.0 536.0,262.0 543.6,257.5 552.6,260.5 561.0,267.3 570.6,254.5 580.4,246.3 586.4,245.5 590.0,251.0 598.5,271.0 607.5,267.3 618.0,263.5 624.0,257.5 636.0,259.0 645.0,256.8 655.6,251.5 664.6,249.3 675.0,246.3 682.6,247.0 688.6,252.3 693.0,249.3 699.0,254.5 705.0,255.3 711.0,258.3 723.0,256.8 730.0,259.0 737.5,262.8 743.5,263.5 749.5,256.0 769.0,256.8 773.5,259.0 780.3,268.8 788.6,259.0 794.6,259.8 799.0,266.5 805.0,269.5 817.0,263.5 824.6,266.5 832.0,265.0 843.5,268.8 855.5,262.0 867.5,268.0 873.5,268.8 886.3,275.5 893.8,270.3 905.0,277.8 911.8,275.5 920.0,280.8 927.6,283.0 936.6,292.0 943.4,293.6"/>
<polyline fill="none" stroke="#3070c0" stroke-width="1" points="155.3,313.8 162.0,315.3 167.3,304.0 174.0,306.3 180.0,307.8 186.0,312.3 192.8,308.6 204.0,316.0 210.8,309.3 217.6,310.8 224.3,316.0 241.6,316.0 248.3,310.0 255.9,316.0 267.0,314.6 279.0,316.0 286.6,313.0 295.0,315.3 304.0,316.0 317.5,316.0 326.5,305.6 332.5,305.6 343.0,317.6 356.6,307.0 361.0,299.6 367.8,297.3 373.8,310.0 380.6,300.3 386.6,306.3 394.0,304.8 405.4,289.0 418.0,302.6 424.0,305.6 430.0,316.0 440.0,310.0 449.0,306.3 461.0,316.0 470.0,302.6 479.8,293.6 486.5,296.6 493.3,294.3 499.3,275.5 504.6,286.8 510.6,288.3 519.6,292.8 524.0,292.0 530.0,289.0 536.0,287.5 542.9,261.3 549.6,269.5 560.0,272.5 567.6,280.8 574.4,275.5 581.0,281.5 586.4,277.8 592.5,256.8 598.5,259.0 606.0,244.8 611.3,243.3 617.3,255.3 624.0,253.8 630.0,250.8 636.0,260.5 648.0,256.0 655.6,250.0 661.6,263.5 666.8,256.0 681.0,257.5 690.0,256.0 699.0,249.3 705.0,252.3 717.0,245.5 724.6,254.5 730.0,253.0 736.8,245.5 742.0,248.5 748.0,256.0 754.8,259.8 761.5,250.0 770.5,254.5 781.0,262.0 787.0,258.3 793.0,264.3 805.0,265.8 812.6,257.5 820.0,256.8 830.6,248.5 844.0,249.3 855.5,255.3 862.3,253.0 867.5,254.5 873.5,257.5 879.5,253.0 887.0,253.0 893.0,254.5 900.6,254.5 911.0,249.3 917.0,252.3 923.8,254.5 930.6,250.8 936.6,253.8 942.6,241.8"/>
</g>
<rect x="157" y="246" width="67.7" height="9" fill="#000"/>
<text x="158" y="253" font-family="Liberation Sans" font-size="7.4" fill="#e8e8e8">Stochastic (100,1,1)</text>
<rect x="225" y="246" width="33.2" height="9" fill="#000"/>
<text x="226" y="253" font-family="Liberation Sans" font-size="7.4" fill="#e8e8e8">GBPUSD</text>
<rect x="260" y="246" width="31.2" height="9" fill="#000"/>
<text x="261" y="253" font-family="Liberation Sans" font-size="7.4" fill="#e8e8e8">USDJPY</text>
<rect x="295" y="246" width="31.9" height="9" fill="#000"/>
<text x="296" y="253" font-family="Liberation Sans" font-size="7.4" fill="#e8e8e8">Diff: 67%</text>
<rect x="339" y="246" width="45.2" height="9" fill="#000"/>
<text x="340" y="253" font-family="Liberation Sans" font-size="7.4" fill="#e8e8e8">100.00 33.24</text>
<path d="M960 248.5h3" stroke="#c8c8c8"/>
<text x="964" y="250.8" font-family="Liberation Sans" font-size="7.2" fill="#e8e8e8">100</text>
<path d="M960 258.5h3" stroke="#c8c8c8"/>
<text x="964" y="261.6" font-family="Liberation Sans" font-size="7.2" fill="#e8e8e8">80</text>
<path d="M960 280.5h3" stroke="#c8c8c8"/>
<text x="964" y="283.7" font-family="Liberation Sans" font-size="7.2" fill="#e8e8e8">50</text>
<path d="M960 303.5h3" stroke="#c8c8c8"/>
<text x="964" y="305.8" font-family="Liberation Sans" font-size="7.2" fill="#e8e8e8">20</text>
<path d="M960 312.5h3" stroke="#c8c8c8"/>
<text x="964" y="315.7" font-family="Liberation Sans" font-size="7.2" fill="#e8e8e8">0</text>
<path d="M155.5 318V322" stroke="#c8c8c8"/>
<text x="154.2" y="328.8" font-family="Liberation Sans" font-size="7.15" fill="#e8e8e8">20 Jun 2011</text>
<path d="M205.5 318V322" stroke="#c8c8c8"/>
<text x="204.2" y="328.8" font-family="Liberation Sans" font-size="7.15" fill="#e8e8e8">20 Jun 06:40</text>
<path d="M255.5 318V322" stroke="#c8c8c8"/>
<text x="254.2" y="328.8" font-family="Liberation Sans" font-size="7.15" fill="#e8e8e8">20 Jun 07:20</text>
<path d="M305.5 318V322" stroke="#c8c8c8"/>
<text x="304.2" y="328.8" font-family="Liberation Sans" font-size="7.15" fill="#e8e8e8">20 Jun 08:00</text>
<path d="M355.5 318V322" stroke="#c8c8c8"/>
<text x="354.2" y="328.8" font-family="Liberation Sans" font-size="7.15" fill="#e8e8e8">20 Jun 08:40</text>
<path d="M405.5 318V322" stroke="#c8c8c8"/>
<text x="404.2" y="328.8" font-family="Liberation Sans" font-size="7.15" fill="#e8e8e8">20 Jun 09:20</text>
<path d="M455.5 318V322" stroke="#c8c8c8"/>
<text x="454.2" y="328.8" font-family="Liberation Sans" font-size="7.15" fill="#e8e8e8">20 Jun 10:00</text>
<path d="M505.5 318V322" stroke="#c8c8c8"/>
<text x="504.2" y="328.8" font-family="Liberation Sans" font-size="7.15" fill="#e8e8e8">20 Jun 10:40</text>
<path d="M555.5 318V322" stroke="#c8c8c8"/>
<text x="554.2" y="328.8" font-family="Liberation Sans" font-size="7.15" fill="#e8e8e8">20 Jun 11:20</text>
<path d="M605.5 318V322" stroke="#c8c8c8"/>
<text x="604.2" y="328.8" font-family="Liberation Sans" font-size="7.15" fill="#e8e8e8">20 Jun 12:00</text>
<path d="M655.5 318V322" stroke="#c8c8c8"/>
<text x="654.2" y="328.8" font-family="Liberation Sans" font-size="7.15" fill="#e8e8e8">20 Jun 12:40</text>
<path d="M705.5 318V322" stroke="#c8c8c8"/>
<text x="704.2" y="328.8" font-family="Liberation Sans" font-size="7.15" fill="#e8e8e8">20 Jun 13:20</text>
<path d="M755.5 318V322" stroke="#c8c8c8"/>
<text x="754.2" y="328.8" font-family="Liberation Sans" font-size="7.15" fill="#e8e8e8">20 Jun 14:00</text>
<path d="M805.5 318V322" stroke="#c8c8c8"/>
<text x="804.2" y="328.8" font-family="Liberation Sans" font-size="7.15" fill="#e8e8e8">20 Jun 14:40</text>
<path d="M855.5 318V322" stroke="#c8c8c8"/>
<text x="854.2" y="328.8" font-family="Liberation Sans" font-size="7.15" fill="#e8e8e8">20 Jun 15:20</text>
<path d="M905.5 318V322" stroke="#c8c8c8"/>
<text x="904.2" y="328.8" font-family="Liberation Sans" font-size="7.15" fill="#e8e8e8">20 Jun 16:00</text>
</svg>
<div class="a" style="left:152px;top:332px;width:841px;height:21px;background:#f0f0f0"></div>
<div class="a" style="left:152px;top:333.5px;width:841px;height:1.2px;background:#3a3a3a"></div>
<div class="a" style="left:152px;top:352px;width:841px;height:1px;background:#fafafa"></div>
<div class="a" style="left:341.5px;top:333px;width:62px;height:15.5px;background:#fff;border:1px solid #303030;border-top:none;border-right-width:2px;border-bottom-width:2px"></div>
<div class="t" style="left:162px;top:336.6px;font-size:7.9px;color:#8a8a8a">EURUSD,M5</div>
<div class="t" style="left:224.6px;top:336.6px;font-size:7.9px;color:#8a8a8a">NZDUSD,M5</div>
<div class="t" style="left:287.6px;top:336.6px;font-size:7.9px;color:#8a8a8a">EURUSD,M5</div>
<div class="t" style="left:349.6px;top:336.6px;font-size:7.9px;color:#111">GBPUSD,M5</div>
<div class="t" style="left:411.5px;top:336.6px;font-size:7.9px;color:#8a8a8a">AUDUSD,M5</div>
<div class="t" style="left:474.6px;top:336.6px;font-size:7.9px;color:#8a8a8a">USDJPY,H1</div>
<div class="t" style="left:534.9px;top:336.6px;font-size:7.9px;color:#8a8a8a">GBPUSD,H4</div>
<div class="t" style="left:598px;top:336.6px;font-size:7.9px;color:#8a8a8a">GBPUSD,H1</div>
<div class="t" style="left:659.3px;top:336.6px;font-size:7.9px;color:#8a8a8a">USDCHF,H1</div>
<div class="a" style="left:216.8px;top:336px;width:1px;height:11px;background:#909090"></div>
<div class="a" style="left:279.8px;top:336px;width:1px;height:11px;background:#909090"></div>
<div class="a" style="left:466.9px;top:336px;width:1px;height:11px;background:#909090"></div>
<div class="a" style="left:526.5px;top:336px;width:1px;height:11px;background:#909090"></div>
<div class="a" style="left:589.2px;top:336px;width:1px;height:11px;background:#909090"></div>
<div class="a" style="left:651.5px;top:336px;width:1px;height:11px;background:#909090"></div>
<div class="a" style="left:714.6px;top:336px;width:1px;height:11px;background:#909090"></div>
<svg class="a" style="left:969px;top:338px" width="22" height="7"><path d="M4 1v5l-2.5-2.5z" fill="#a0a0a0"/><path d="M16 1v5l2.5-2.5z" fill="#a0a0a0"/></svg>
<div class="a" style="left:6px;top:349px;width:146px;height:4px;background:#f0f0f0"></div>
<div class="a" style="left:150.5px;top:331px;width:1.2px;height:18.5px;background:#808080"></div>
<div class="a" style="left:6px;top:348.5px;width:145.5px;height:1px;background:#a8a8a8"></div>
<div class="a" style="left:6px;top:353px;width:987px;height:212px;background:#f0f0f0"></div>
<svg class="a" style="left:8.5px;top:354px" width="7" height="7"><path d="M1 1l4.5 4.5M5.5 1l-4.5 4.5" stroke="#111" stroke-width="1.3"/></svg>
<div class="a" style="left:6.5px;top:364px;width:11px;height:199px;background:linear-gradient(90deg,#c8d8e8,#dde7f1)"></div>
<svg class="a" style="left:6px;top:520px" width="12" height="45"><text x="0" y="0" transform="translate(9.3,43) rotate(-90)" font-family="Liberation Sans" font-size="9" fill="#6a7f94">Terminal</text></svg>
<div class="a" style="left:18.5px;top:353px;width:973px;height:191px;background:#fff;border-left:1px solid #d0d0d0"></div>
<div class="a" style="left:18.5px;top:353px;width:973px;height:20px;background:linear-gradient(#ffffff,#f0f0f0)"></div>
<div class="t" style="left:523.5px;top:357.5px;color:#888;font-size:9.5px">/</div>
<div class="t" style="left:24px;top:357.5px;color:#222;font-size:8.8px">Order</div>
<div class="t" style="left:72px;width:200px;text-align:right;top:357.5px;color:#222;font-size:8.8px">Time</div>
<div class="t" style="left:139px;width:200px;text-align:right;top:357.5px;color:#222;font-size:8.8px">Type</div>
<div class="t" style="left:191px;width:200px;text-align:right;top:357.5px;color:#222;font-size:8.8px">Size</div>
<div class="t" style="left:257px;width:200px;text-align:right;top:357.5px;color:#222;font-size:8.8px">Symbol</div>
<div class="t" style="left:315px;width:200px;text-align:right;top:357.5px;color:#222;font-size:8.8px">Price</div>
<div class="t" style="left:404px;width:200px;text-align:right;top:357.5px;color:#222;font-size:8.8px">S / L</div>
<div class="t" style="left:478px;width:200px;text-align:right;top:357.5px;color:#222;font-size:8.8px">T / P</div>
<div class="t" style="left:552px;width:200px;text-align:right;top:357.5px;color:#222;font-size:8.8px">Price</div>
<div class="t" style="left:625.5px;width:200px;text-align:right;top:357.5px;color:#222;font-size:8.8px">Commission</div>
<div class="t" style="left:698px;width:200px;text-align:right;top:357.5px;color:#222;font-size:8.8px">Swap</div>
<div class="t" style="left:786px;width:200px;text-align:right;top:357.5px;color:#222;font-size:8.8px">Profit</div>
<div class="a" style="left:19.5px;top:372.0px;width:972px;height:16.1px;background:#ffffff;border-top:1px solid #dcdcdc"></div>
<div class="a" style="left:19.5px;top:387.6px;width:972px;height:16.1px;background:#ececec;border-top:1px solid #dcdcdc"></div>
<div class="a" style="left:19.5px;top:403.2px;width:972px;height:16.1px;background:#ffffff;border-top:1px solid #dcdcdc"></div>
<div class="a" style="left:19.5px;top:418.8px;width:972px;height:16.1px;background:#ececec;border-top:1px solid #dcdcdc"></div>
<div class="a" style="left:19.5px;top:434.4px;width:972px;height:16.1px;background:#ffffff;border-top:1px solid #dcdcdc"></div>
<div class="a" style="left:19.5px;top:450.0px;width:972px;height:16.1px;background:#3399ff;"></div>
<div class="a" style="left:19.5px;top:465.6px;width:972px;height:16.1px;background:#ffffff;border-top:1px solid #dcdcdc"></div>
<div class="a" style="left:19.5px;top:481.2px;width:972px;height:16.1px;background:#ececec;border-top:1px solid #dcdcdc"></div>
<div class="a" style="left:19.5px;top:496.8px;width:972px;height:16.1px;background:#ffffff;border-top:1px solid #dcdcdc"></div>
<div class="a" style="left:19.5px;top:512.4px;width:972px;height:16.1px;background:#ececec;border-top:1px solid #dcdcdc"></div>
<div class="a" style="left:114.2px;top:353px;width:1px;height:175.7px;background:#d8d8d8"></div><div class="a" style="left:276.3px;top:353px;width:1px;height:175.7px;background:#d8d8d8"></div><div class="a" style="left:343.3px;top:353px;width:1px;height:175.7px;background:#d8d8d8"></div><div class="a" style="left:394px;top:353px;width:1px;height:175.7px;background:#d8d8d8"></div><div class="a" style="left:460.5px;top:353px;width:1px;height:175.7px;background:#d8d8d8"></div><div class="a" style="left:534px;top:353px;width:1px;height:175.7px;background:#d8d8d8"></div><div class="a" style="left:607.5px;top:353px;width:1px;height:175.7px;background:#d8d8d8"></div><div class="a" style="left:681.2px;top:353px;width:1px;height:175.7px;background:#d8d8d8"></div><div class="a" style="left:755px;top:353px;width:1px;height:175.7px;background:#d8d8d8"></div><div class="a" style="left:829px;top:353px;width:1px;height:175.7px;background:#d8d8d8"></div><div class="a" style="left:902.4px;top:353px;width:1px;height:175.7px;background:#d8d8d8"></div>
<svg class="a" style="left:21px;top:375.3px" width="13" height="13"><path d="M0.5 0.5h6.5l2.5 2.5v7.5h-9z" fill="#fbfbfb" stroke="#6a6a6a" stroke-width="0.9"/><path d="M7 0.5v2.5h2.5" fill="none" stroke="#6a6a6a" stroke-width="0.8"/><circle cx="8.3" cy="8.3" r="2.9" fill="#2a80d0"/><circle cx="7.8" cy="7.6" r="1" fill="#fff" fill-opacity="0.35"/></svg>
<div class="t" style="left:38px;top:375.3px;color:#1a1a1a;font-size:8.5px">61755277</div>
<div class="t" style="left:74px;width:200px;text-align:right;top:375.3px;color:#1a1a1a;font-size:8.5px">2011.06.20 03:10</div>
<div class="t" style="left:139px;width:200px;text-align:right;top:375.3px;color:#1a1a1a;font-size:8.5px">buy</div>
<div class="t" style="left:191.5px;width:200px;text-align:right;top:375.3px;color:#1a1a1a;font-size:8.5px">0.05</div>
<div class="t" style="left:258.5px;width:200px;text-align:right;top:375.3px;color:#1a1a1a;font-size:8.5px">nzdusd</div>
<div class="t" style="left:332px;width:200px;text-align:right;top:375.3px;color:#1a1a1a;font-size:8.5px">0.80992</div>
<div class="t" style="left:404px;width:200px;text-align:right;top:375.3px;color:#1a1a1a;font-size:8.5px">0.00000</div>
<div class="t" style="left:478px;width:200px;text-align:right;top:375.3px;color:#1a1a1a;font-size:8.5px">0.00000</div>
<div class="t" style="left:552px;width:200px;text-align:right;top:375.3px;color:#1a1a1a;font-size:8.5px">0.80947</div>
<div class="t" style="left:625.5px;width:200px;text-align:right;top:375.3px;color:#1a1a1a;font-size:8.5px">0.00</div>
<div class="t" style="left:698px;width:200px;text-align:right;top:375.3px;color:#1a1a1a;font-size:8.5px">0.00</div>
<div class="t" style="left:786px;width:200px;text-align:right;top:375.3px;color:#1a1a1a;font-size:8.5px">-2.25</div>
<svg class="a" style="left:21px;top:390.90000000000003px" width="13" height="13"><path d="M0.5 0.5h6.5l2.5 2.5v7.5h-9z" fill="#fbfbfb" stroke="#6a6a6a" stroke-width="0.9"/><path d="M7 0.5v2.5h2.5" fill="none" stroke="#6a6a6a" stroke-width="0.8"/><circle cx="8.3" cy="8.3" r="2.9" fill="#c06818"/><circle cx="7.8" cy="7.6" r="1" fill="#fff" fill-opacity="0.35"/></svg>
<div class="t" style="left:38px;top:390.90000000000003px;color:#1a1a1a;font-size:8.5px">61753763</div>
<div class="t" style="left:74px;width:200px;text-align:right;top:390.90000000000003px;color:#1a1a1a;font-size:8.5px">2011.06.20 02:55</div>
<div class="t" style="left:139px;width:200px;text-align:right;top:390.90000000000003px;color:#1a1a1a;font-size:8.5px">sell</div>
<div class="t" style="left:191.5px;width:200px;text-align:right;top:390.90000000000003px;color:#1a1a1a;font-size:8.5px">0.05</div>
<div class="t" style="left:258.5px;width:200px;text-align:right;top:390.90000000000003px;color:#1a1a1a;font-size:8.5px">usdchf</div>
<div class="t" style="left:332px;width:200px;text-align:right;top:390.90000000000003px;color:#1a1a1a;font-size:8.5px">0.84903</div>
<div class="t" style="left:404px;width:200px;text-align:right;top:390.90000000000003px;color:#1a1a1a;font-size:8.5px">0.00000</div>
<div class="t" style="left:478px;width:200px;text-align:right;top:390.90000000000003px;color:#1a1a1a;font-size:8.5px">0.00000</div>
<div class="t" style="left:552px;width:200px;text-align:right;top:390.90000000000003px;color:#1a1a1a;font-size:8.5px">0.84421</div>
<div class="t" style="left:625.5px;width:200px;text-align:right;top:390.90000000000003px;color:#1a1a1a;font-size:8.5px">0.00</div>
<div class="t" style="left:698px;width:200px;text-align:right;top:390.90000000000003px;color:#1a1a1a;font-size:8.5px">0.00</div>
<div class="t" style="left:786px;width:200px;text-align:right;top:390.90000000000003px;color:#1a1a1a;font-size:8.5px">28.55</div>
<svg class="a" style="left:21px;top:406.5px" width="13" height="13"><path d="M0.5 0.5h6.5l2.5 2.5v7.5h-9z" fill="#fbfbfb" stroke="#6a6a6a" stroke-width="0.9"/><path d="M7 0.5v2.5h2.5" fill="none" stroke="#6a6a6a" stroke-width="0.8"/><circle cx="8.3" cy="8.3" r="2.9" fill="#c06818"/><circle cx="7.8" cy="7.6" r="1" fill="#fff" fill-opacity="0.35"/></svg>
<div class="t" style="left:38px;top:406.5px;color:#1a1a1a;font-size:8.5px">61755289</div>
<div class="t" style="left:74px;width:200px;text-align:right;top:406.5px;color:#1a1a1a;font-size:8.5px">2011.06.20 03:10</div>
<div class="t" style="left:139px;width:200px;text-align:right;top:406.5px;color:#1a1a1a;font-size:8.5px">sell</div>
<div class="t" style="left:191.5px;width:200px;text-align:right;top:406.5px;color:#1a1a1a;font-size:8.5px">0.05</div>
<div class="t" style="left:258.5px;width:200px;text-align:right;top:406.5px;color:#1a1a1a;font-size:8.5px">usdchf</div>
<div class="t" style="left:332px;width:200px;text-align:right;top:406.5px;color:#1a1a1a;font-size:8.5px">0.84906</div>
<div class="t" style="left:404px;width:200px;text-align:right;top:406.5px;color:#1a1a1a;font-size:8.5px">0.00000</div>
<div class="t" style="left:478px;width:200px;text-align:right;top:406.5px;color:#1a1a1a;font-size:8.5px">0.00000</div>
<div class="t" style="left:552px;width:200px;text-align:right;top:406.5px;color:#1a1a1a;font-size:8.5px">0.84421</div>
<div class="t" style="left:625.5px;width:200px;text-align:right;top:406.5px;color:#1a1a1a;font-size:8.5px">0.00</div>
<div class="t" style="left:698px;width:200px;text-align:right;top:406.5px;color:#1a1a1a;font-size:8.5px">0.00</div>
<div class="t" style="left:786px;width:200px;text-align:right;top:406.5px;color:#1a1a1a;font-size:8.5px">28.73</div>
<svg class="a" style="left:21px;top:422.1px" width="13" height="13"><path d="M0.5 0.5h6.5l2.5 2.5v7.5h-9z" fill="#fbfbfb" stroke="#6a6a6a" stroke-width="0.9"/><path d="M7 0.5v2.5h2.5" fill="none" stroke="#6a6a6a" stroke-width="0.8"/><circle cx="8.3" cy="8.3" r="2.9" fill="#c06818"/><circle cx="7.8" cy="7.6" r="1" fill="#fff" fill-opacity="0.35"/></svg>
<div class="t" style="left:38px;top:422.1px;color:#1a1a1a;font-size:8.5px">61755384</div>
<div class="t" style="left:74px;width:200px;text-align:right;top:422.1px;color:#1a1a1a;font-size:8.5px">2011.06.20 03:12</div>
<div class="t" style="left:139px;width:200px;text-align:right;top:422.1px;color:#1a1a1a;font-size:8.5px">sell</div>
<div class="t" style="left:191.5px;width:200px;text-align:right;top:422.1px;color:#1a1a1a;font-size:8.5px">0.05</div>
<div class="t" style="left:258.5px;width:200px;text-align:right;top:422.1px;color:#1a1a1a;font-size:8.5px">usdcad</div>
<div class="t" style="left:332px;width:200px;text-align:right;top:422.1px;color:#1a1a1a;font-size:8.5px">0.98117</div>
<div class="t" style="left:404px;width:200px;text-align:right;top:422.1px;color:#1a1a1a;font-size:8.5px">0.00000</div>
<div class="t" style="left:478px;width:200px;text-align:right;top:422.1px;color:#1a1a1a;font-size:8.5px">0.00000</div>
<div class="t" style="left:552px;width:200px;text-align:right;top:422.1px;color:#1a1a1a;font-size:8.5px">0.97967</div>
<div class="t" style="left:625.5px;width:200px;text-align:right;top:422.1px;color:#1a1a1a;font-size:8.5px">0.00</div>
<div class="t" style="left:698px;width:200px;text-align:right;top:422.1px;color:#1a1a1a;font-size:8.5px">0.00</div>
<div class="t" style="left:786px;width:200px;text-align:right;top:422.1px;color:#1a1a1a;font-size:8.5px">7.66</div>
<svg class="a" style="left:21px;top:437.7px" width="13" height="13"><path d="M0.5 0.5h6.5l2.5 2.5v7.5h-9z" fill="#fbfbfb" stroke="#6a6a6a" stroke-width="0.9"/><path d="M7 0.5v2.5h2.5" fill="none" stroke="#6a6a6a" stroke-width="0.8"/><circle cx="8.3" cy="8.3" r="2.9" fill="#c06818"/><circle cx="7.8" cy="7.6" r="1" fill="#fff" fill-opacity="0.35"/></svg>
<div class="t" style="left:38px;top:437.7px;color:#1a1a1a;font-size:8.5px">61760994</div>
<div class="t" style="left:74px;width:200px;text-align:right;top:437.7px;color:#1a1a1a;font-size:8.5px">2011.06.20 04:22</div>
<div class="t" style="left:139px;width:200px;text-align:right;top:437.7px;color:#1a1a1a;font-size:8.5px">sell</div>
<div class="t" style="left:191.5px;width:200px;text-align:right;top:437.7px;color:#1a1a1a;font-size:8.5px">0.05</div>
<div class="t" style="left:258.5px;width:200px;text-align:right;top:437.7px;color:#1a1a1a;font-size:8.5px">usdcad</div>
<div class="t" style="left:332px;width:200px;text-align:right;top:437.7px;color:#1a1a1a;font-size:8.5px">0.98138</div>
<div class="t" style="left:404px;width:200px;text-align:right;top:437.7px;color:#1a1a1a;font-size:8.5px">0.00000</div>
<div class="t" style="left:478px;width:200px;text-align:right;top:437.7px;color:#1a1a1a;font-size:8.5px">0.00000</div>
<div class="t" style="left:552px;width:200px;text-align:right;top:437.7px;color:#1a1a1a;font-size:8.5px">0.97967</div>
<div class="t" style="left:625.5px;width:200px;text-align:right;top:437.7px;color:#1a1a1a;font-size:8.5px">0.00</div>
<div class="t" style="left:698px;width:200px;text-align:right;top:437.7px;color:#1a1a1a;font-size:8.5px">0.00</div>
<div class="t" style="left:786px;width:200px;text-align:right;top:437.7px;color:#1a1a1a;font-size:8.5px">8.73</div>
<svg class="a" style="left:21px;top:453.3px" width="13" height="13"><path d="M0.5 0.5h6.5l2.5 2.5v7.5h-9z" fill="#fbfbfb" stroke="#6a6a6a" stroke-width="0.9"/><path d="M7 0.5v2.5h2.5" fill="none" stroke="#6a6a6a" stroke-width="0.8"/><circle cx="8.3" cy="8.3" r="2.9" fill="#2a80d0"/><circle cx="7.8" cy="7.6" r="1" fill="#fff" fill-opacity="0.35"/></svg>
<div class="t" style="left:38px;top:453.3px;color:#fff;font-size:8.5px">61760984</div>
<div class="t" style="left:74px;width:200px;text-align:right;top:453.3px;color:#fff;font-size:8.5px">2011.06.20 04:22</div>
<div class="t" style="left:139px;width:200px;text-align:right;top:453.3px;color:#fff;font-size:8.5px">buy</div>
<div class="t" style="left:191.5px;width:200px;text-align:right;top:453.3px;color:#fff;font-size:8.5px">0.05</div>
<div class="t" style="left:258.5px;width:200px;text-align:right;top:453.3px;color:#fff;font-size:8.5px">audusd</div>
<div class="t" style="left:332px;width:200px;text-align:right;top:453.3px;color:#fff;font-size:8.5px">1.05982</div>
<div class="t" style="left:404px;width:200px;text-align:right;top:453.3px;color:#fff;font-size:8.5px">0.00000</div>
<div class="t" style="left:478px;width:200px;text-align:right;top:453.3px;color:#fff;font-size:8.5px">0.00000</div>
<div class="t" style="left:552px;width:200px;text-align:right;top:453.3px;color:#fff;font-size:8.5px">1.05613</div>
<div class="t" style="left:625.5px;width:200px;text-align:right;top:453.3px;color:#fff;font-size:8.5px">0.00</div>
<div class="t" style="left:698px;width:200px;text-align:right;top:453.3px;color:#fff;font-size:8.5px">0.00</div>
<div class="t" style="left:786px;width:200px;text-align:right;top:453.3px;color:#fff;font-size:8.5px">-18.45</div>
<svg class="a" style="left:21px;top:468.90000000000003px" width="13" height="13"><path d="M0.5 0.5h6.5l2.5 2.5v7.5h-9z" fill="#fbfbfb" stroke="#6a6a6a" stroke-width="0.9"/><path d="M7 0.5v2.5h2.5" fill="none" stroke="#6a6a6a" stroke-width="0.8"/><circle cx="8.3" cy="8.3" r="2.9" fill="#2a80d0"/><circle cx="7.8" cy="7.6" r="1" fill="#fff" fill-opacity="0.35"/></svg>
<div class="t" style="left:38px;top:468.90000000000003px;color:#1a1a1a;font-size:8.5px">61755354</div>
<div class="t" style="left:74px;width:200px;text-align:right;top:468.90000000000003px;color:#1a1a1a;font-size:8.5px">2011.06.20 03:11</div>
<div class="t" style="left:139px;width:200px;text-align:right;top:468.90000000000003px;color:#1a1a1a;font-size:8.5px">buy</div>
<div class="t" style="left:191.5px;width:200px;text-align:right;top:468.90000000000003px;color:#1a1a1a;font-size:8.5px">0.05</div>
<div class="t" style="left:258.5px;width:200px;text-align:right;top:468.90000000000003px;color:#1a1a1a;font-size:8.5px">eurusd</div>
<div class="t" style="left:332px;width:200px;text-align:right;top:468.90000000000003px;color:#1a1a1a;font-size:8.5px">1.42677</div>
<div class="t" style="left:404px;width:200px;text-align:right;top:468.90000000000003px;color:#1a1a1a;font-size:8.5px">0.00000</div>
<div class="t" style="left:478px;width:200px;text-align:right;top:468.90000000000003px;color:#1a1a1a;font-size:8.5px">0.00000</div>
<div class="t" style="left:552px;width:200px;text-align:right;top:468.90000000000003px;color:#1a1a1a;font-size:8.5px">1.43061</div>
<div class="t" style="left:625.5px;width:200px;text-align:right;top:468.90000000000003px;color:#1a1a1a;font-size:8.5px">0.00</div>
<div class="t" style="left:698px;width:200px;text-align:right;top:468.90000000000003px;color:#1a1a1a;font-size:8.5px">0.00</div>
<div class="t" style="left:786px;width:200px;text-align:right;top:468.90000000000003px;color:#1a1a1a;font-size:8.5px">19.20</div>
<svg class="a" style="left:21px;top:484.5px" width="13" height="13"><path d="M0.5 0.5h6.5l2.5 2.5v7.5h-9z" fill="#fbfbfb" stroke="#6a6a6a" stroke-width="0.9"/><path d="M7 0.5v2.5h2.5" fill="none" stroke="#6a6a6a" stroke-width="0.8"/><circle cx="8.3" cy="8.3" r="2.9" fill="#2a80d0"/><circle cx="7.8" cy="7.6" r="1" fill="#fff" fill-opacity="0.35"/></svg>
<div class="t" style="left:38px;top:484.5px;color:#1a1a1a;font-size:8.5px">61752880</div>
<div class="t" style="left:74px;width:200px;text-align:right;top:484.5px;color:#1a1a1a;font-size:8.5px">2011.06.20 02:45</div>
<div class="t" style="left:139px;width:200px;text-align:right;top:484.5px;color:#1a1a1a;font-size:8.5px">buy</div>
<div class="t" style="left:191.5px;width:200px;text-align:right;top:484.5px;color:#1a1a1a;font-size:8.5px">0.05</div>
<div class="t" style="left:258.5px;width:200px;text-align:right;top:484.5px;color:#1a1a1a;font-size:8.5px">eurusd</div>
<div class="t" style="left:332px;width:200px;text-align:right;top:484.5px;color:#1a1a1a;font-size:8.5px">1.42808</div>
<div class="t" style="left:404px;width:200px;text-align:right;top:484.5px;color:#1a1a1a;font-size:8.5px">0.00000</div>
<div class="t" style="left:478px;width:200px;text-align:right;top:484.5px;color:#1a1a1a;font-size:8.5px">0.00000</div>
<div class="t" style="left:552px;width:200px;text-align:right;top:484.5px;color:#1a1a1a;font-size:8.5px">1.43061</div>
<div class="t" style="left:625.5px;width:200px;text-align:right;top:484.5px;color:#1a1a1a;font-size:8.5px">0.00</div>
<div class="t" style="left:698px;width:200px;text-align:right;top:484.5px;color:#1a1a1a;font-size:8.5px">0.00</div>
<div class="t" style="left:786px;width:200px;text-align:right;top:484.5px;color:#1a1a1a;font-size:8.5px">12.65</div>
<svg class="a" style="left:21px;top:500.1px" width="13" height="13"><path d="M0.5 0.5h6.5l2.5 2.5v7.5h-9z" fill="#fbfbfb" stroke="#6a6a6a" stroke-width="0.9"/><path d="M7 0.5v2.5h2.5" fill="none" stroke="#6a6a6a" stroke-width="0.8"/><circle cx="8.3" cy="8.3" r="2.9" fill="#2a80d0"/><circle cx="7.8" cy="7.6" r="1" fill="#fff" fill-opacity="0.35"/></svg>
<div class="t" style="left:38px;top:500.1px;color:#1a1a1a;font-size:8.5px">61755429</div>
<div class="t" style="left:74px;width:200px;text-align:right;top:500.1px;color:#1a1a1a;font-size:8.5px">2011.06.20 03:12</div>
<div class="t" style="left:139px;width:200px;text-align:right;top:500.1px;color:#1a1a1a;font-size:8.5px">buy</div>
<div class="t" style="left:191.5px;width:200px;text-align:right;top:500.1px;color:#1a1a1a;font-size:8.5px">0.05</div>
<div class="t" style="left:258.5px;width:200px;text-align:right;top:500.1px;color:#1a1a1a;font-size:8.5px">gbpusd</div>
<div class="t" style="left:332px;width:200px;text-align:right;top:500.1px;color:#1a1a1a;font-size:8.5px">1.61594</div>
<div class="t" style="left:404px;width:200px;text-align:right;top:500.1px;color:#1a1a1a;font-size:8.5px">0.00000</div>
<div class="t" style="left:478px;width:200px;text-align:right;top:500.1px;color:#1a1a1a;font-size:8.5px">0.00000</div>
<div class="t" style="left:552px;width:200px;text-align:right;top:500.1px;color:#1a1a1a;font-size:8.5px">1.62105</div>
<div class="t" style="left:625.5px;width:200px;text-align:right;top:500.1px;color:#1a1a1a;font-size:8.5px">0.00</div>
<div class="t" style="left:698px;width:200px;text-align:right;top:500.1px;color:#1a1a1a;font-size:8.5px">0.00</div>
<div class="t" style="left:786px;width:200px;text-align:right;top:500.1px;color:#1a1a1a;font-size:8.5px">25.55</div>
<svg class="a" style="left:21px;top:515.6999999999999px" width="13" height="13"><path d="M0.5 0.5h6.5l2.5 2.5v7.5h-9z" fill="#fbfbfb" stroke="#6a6a6a" stroke-width="0.9"/><path d="M7 0.5v2.5h2.5" fill="none" stroke="#6a6a6a" stroke-width="0.8"/><circle cx="8.3" cy="8.3" r="2.9" fill="#c06818"/><circle cx="7.8" cy="7.6" r="1" fill="#fff" fill-opacity="0.35"/></svg>
<div class="t" style="left:38px;top:515.6999999999999px;color:#1a1a1a;font-size:8.5px">61755443</div>
<div class="t" style="left:74px;width:200px;text-align:right;top:515.6999999999999px;color:#1a1a1a;font-size:8.5px">2011.06.20 03:13</div>
<div class="t" style="left:139px;width:200px;text-align:right;top:515.6999999999999px;color:#1a1a1a;font-size:8.5px">sell</div>
<div class="t" style="left:191.5px;width:200px;text-align:right;top:515.6999999999999px;color:#1a1a1a;font-size:8.5px">0.05</div>
<div class="t" style="left:258.5px;width:200px;text-align:right;top:515.6999999999999px;color:#1a1a1a;font-size:8.5px">usdjpy</div>
<div class="t" style="left:332px;width:200px;text-align:right;top:515.6999999999999px;color:#1a1a1a;font-size:8.5px">80.127</div>
<div class="t" style="left:404px;width:200px;text-align:right;top:515.6999999999999px;color:#1a1a1a;font-size:8.5px">0.000</div>
<div class="t" style="left:478px;width:200px;text-align:right;top:515.6999999999999px;color:#1a1a1a;font-size:8.5px">0.000</div>
<div class="t" style="left:552px;width:200px;text-align:right;top:515.6999999999999px;color:#1a1a1a;font-size:8.5px">80.149</div>
<div class="t" style="left:625.5px;width:200px;text-align:right;top:515.6999999999999px;color:#1a1a1a;font-size:8.5px">0.00</div>
<div class="t" style="left:698px;width:200px;text-align:right;top:515.6999999999999px;color:#1a1a1a;font-size:8.5px">0.00</div>
<div class="t" style="left:786px;width:200px;text-align:right;top:515.6999999999999px;color:#1a1a1a;font-size:8.5px">-1.37</div>
<div class="a" style="left:19.5px;top:528.7px;width:972px;height:15.3px;background:#c8c8c8"></div>
<svg class="a" style="left:21.5px;top:530.5px" width="11" height="12"><rect x="0.5" y="0.5" width="10" height="11" fill="#fff" stroke="#30a030"/><path d="M5.5 2.5L8.5 5.8H6.8V9.5H4.2V5.8H2.5z" fill="#20a020"/></svg>
<div class="t" style="left:37px;top:531.5px;font-weight:bold;color:#111;font-size:8.5px">Balance: 891.26&nbsp; Equity: 1,000.26&nbsp; Margin: 283.51&nbsp; Free margin: 716.75&nbsp; Margin level: 352.81%</div>
<div class="t" style="left:786px;width:200px;text-align:right;top:531.5px;font-weight:bold;color:#111;font-size:8.5px">109.00</div>
<div class="a" style="left:18.5px;top:544px;width:975px;height:19px;background:#f0f0f0"></div>
<div class="a" style="left:18.5px;top:547px;width:975px;height:1.5px;background:#404040"></div>
<div class="a" style="left:20px;top:547px;width:37.5px;height:14.5px;background:#fff;border:1px solid #303030;border-top:none;border-right-width:2px;border-bottom-width:2px"></div>
<div class="t" style="left:26px;top:550px;color:#111;font-size:9px">Trade</div>
<div class="t" style="left:65.7px;top:550.5px;color:#8a8a8a;font-size:8.8px">Account History</div>
<div class="t" style="left:140px;top:550.5px;color:#8a8a8a;font-size:8.8px">News</div>
<div class="t" style="left:176.5px;top:550.5px;color:#8a8a8a;font-size:8.8px">Alerts</div>
<div class="t" style="left:213px;top:550.5px;color:#8a8a8a;font-size:8.8px">Mailbox</div>
<div class="t" style="left:257px;top:550.5px;color:#8a8a8a;font-size:8.8px">Experts</div>
<div class="t" style="left:301.5px;top:550.5px;color:#8a8a8a;font-size:8.8px">Journal</div>
<div class="a" style="left:133px;top:550px;width:1px;height:11px;background:#909090"></div>
<div class="a" style="left:169.8px;top:550px;width:1px;height:11px;background:#909090"></div>
<div class="a" style="left:206.5px;top:550px;width:1px;height:11px;background:#909090"></div>
<div class="a" style="left:250.7px;top:550px;width:1px;height:11px;background:#909090"></div>
<div class="a" style="left:295px;top:550px;width:1px;height:11px;background:#909090"></div>
<div class="a" style="left:338px;top:550px;width:1px;height:11px;background:#909090"></div>
<div class="a" style="left:6px;top:563px;width:987px;height:2px;background:#f8f8f8"></div>
<div class="a" style="left:6px;top:565px;width:987px;height:18px;background:#f0f0f0;border-top:1px solid #d8d8d8"></div>
<div class="t" style="left:8.5px;top:571px;color:#111;font-size:8.6px">For Help, press F1</div>
<div class="a" style="left:425.5px;top:567px;width:1px;height:16px;background:#c0c0c0"></div>
<div class="a" style="left:516.5px;top:567px;width:1px;height:16px;background:#c0c0c0"></div>
<div class="a" style="left:596.7px;top:567px;width:1px;height:16px;background:#c0c0c0"></div>
<div class="a" style="left:651.6px;top:567px;width:1px;height:16px;background:#c0c0c0"></div>
<div class="a" style="left:707px;top:567px;width:1px;height:16px;background:#c0c0c0"></div>
<div class="a" style="left:761px;top:567px;width:1px;height:16px;background:#c0c0c0"></div>
<div class="a" style="left:814.5px;top:567px;width:1px;height:16px;background:#c0c0c0"></div>
<div class="a" style="left:867px;top:567px;width:1px;height:16px;background:#c0c0c0"></div>
<div class="t" style="left:430px;top:571px;color:#111;font-size:8.6px">Default</div>
<svg class="a" style="left:870px;top:570.5px" width="20" height="11"><rect x="0" y="0" width="19.5" height="10" fill="#3a4a30"/><path d="M0 0H19.5L0 10z" fill="#8cae24"/><path d="M19.5 0V10H0z" fill="#2c6c9c"/><rect x="1.60" y="0" width="0.7" height="10" fill="#2a2a2a"/><rect x="3.75" y="0" width="0.7" height="10" fill="#2a2a2a"/><rect x="5.90" y="0" width="0.7" height="10" fill="#2a2a2a"/><rect x="8.05" y="0" width="0.7" height="10" fill="#2a2a2a"/><rect x="10.20" y="0" width="0.7" height="10" fill="#2a2a2a"/><rect x="12.35" y="0" width="0.7" height="10" fill="#2a2a2a"/><rect x="14.50" y="0" width="0.7" height="10" fill="#2a2a2a"/><rect x="16.65" y="0" width="0.7" height="10" fill="#2a2a2a"/><rect x="18.80" y="0" width="0.7" height="10" fill="#2a2a2a"/></svg>
<div class="t" style="left:914.5px;top:571px;color:#111;font-size:9px">1148/5 kb</div>
<svg class="a" style="left:980px;top:570px" width="12" height="12"><path d="M11 3L3 11M11 6L6 11M11 9L9 11" stroke="#a0a0a0" stroke-width="1"/></svg>
</body></html>
